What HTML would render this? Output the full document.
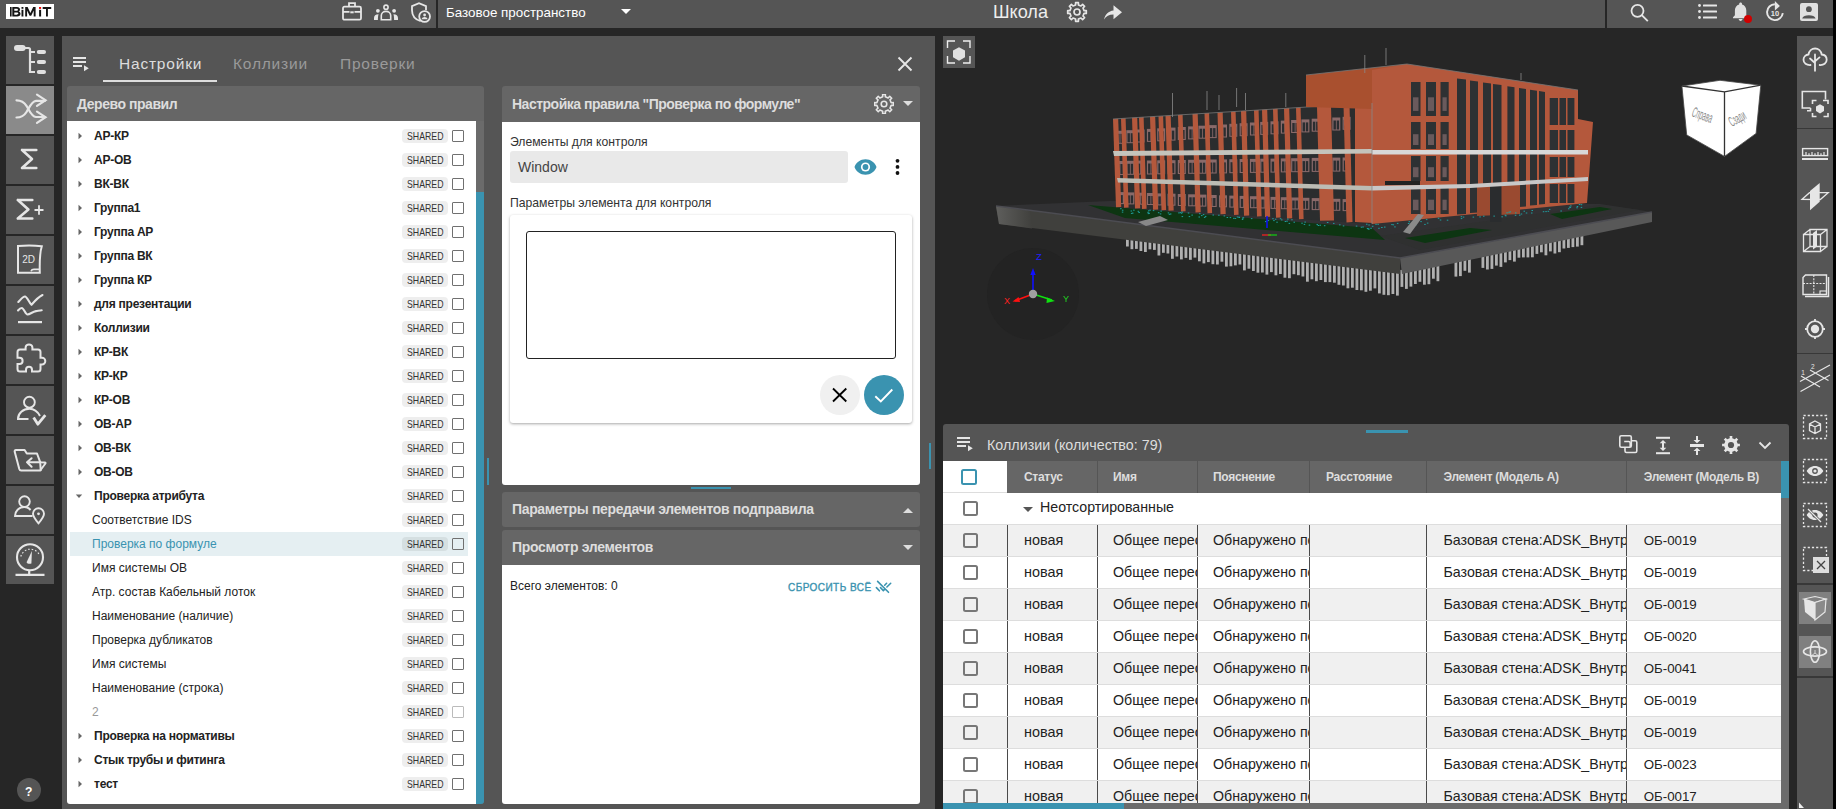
<!DOCTYPE html><html><head><meta charset="utf-8"><style>
html,body{margin:0;padding:0;}
body{width:1836px;height:809px;overflow:hidden;position:relative;background:#262626;font-family:"Liberation Sans",sans-serif;}
div,svg{box-sizing:border-box;}
</style></head><body>
<div style="position:absolute;left:0px;top:0px;width:1833px;height:28px;background:#555555;"></div>
<div style="position:absolute;left:6px;top:4px;width:48px;height:15px;background:#fff;"></div>
<svg style="position:absolute;left:6px;top:4px;" width="48" height="15" viewBox="0 0 48 15"><g fill="#151515">
<rect x="4" y="3" width="1.6" height="9.5"/>
<path d="M6.3 3h4.6c2 0 3.1 1 3.1 2.4c0 1-0.6 1.7-1.4 2c1.2 0.3 1.9 1.2 1.9 2.3c0 1.7-1.3 2.8-3.4 2.8H6.3z M8.3 4.7v2.1h2.3c0.9 0 1.3-0.4 1.3-1.05s-0.4-1.05-1.3-1.05z M8.3 8.4v2.4h2.5c1 0 1.5-0.45 1.5-1.2s-0.5-1.2-1.5-1.2z"/>
<rect x="15.5" y="3" width="1.9" height="1.8"/><rect x="15.5" y="5.8" width="1.9" height="6.7"/>
<path d="M19.2 12.5V3h2.4l2.8 6l2.8-6h2.4v9.5h-1.9V6.5l-2.5 5.3h-1.6l-2.5-5.3v6z"/>
<rect x="33.1" y="5.8" width="2" height="6.7"/>
<path d="M36.7 3h8.5v1.9h-3.3v7.6h-1.9V4.9h-3.3z"/>
</g><rect x="33" y="3" width="2.1" height="1.9" fill="#e00"/></svg>
<svg style="position:absolute;left:340px;top:0px;" width="24" height="24" viewBox="0 0 24 24"><g fill="none" stroke="#e6e6e6" stroke-width="1.8"><rect x="3" y="6.7" width="18" height="13" rx="1.5"/><path d="M9 6.7V3.2h6v3.5"/><path d="M3 11.8h6.5M14.5 11.8H21"/><rect x="10.3" y="11.3" width="3.4" height="2" fill="#e6e6e6" stroke="none"/></g></svg>
<svg style="position:absolute;left:372px;top:0px;" width="28" height="24" viewBox="0 0 28 24"><g fill="#e6e6e6"><circle cx="14" cy="7.2" r="2.1" fill="none" stroke="#e6e6e6" stroke-width="1.6"/><path d="M9.3 19.8V15.6c0-2.5 2.1-4.2 4.7-4.2s4.7 1.7 4.7 4.2V19.8Z" fill="none" stroke="#e6e6e6" stroke-width="1.6"/><circle cx="5.9" cy="10.8" r="1.9"/><circle cx="22.1" cy="10.8" r="1.9"/><path d="M2 20v-2c0-2.2 1.5-3.5 4.6-3.7c-0.5 1.3-0.7 3.3-0.7 5.7z"/><path d="M26 20v-2c0-2.2-1.5-3.5-4.6-3.7c0.5 1.3 0.7 3.3 0.7 5.7z"/></g></svg>
<svg style="position:absolute;left:409px;top:0px;" width="26" height="26" viewBox="0 0 26 26"><g fill="none" stroke="#e6e6e6" stroke-width="1.8"><path d="M11.7 21.2C6.5 19.6 3 15.5 3 10.2V6.2L10 3.2l7 3v4"/><circle cx="15.6" cy="16.5" r="5.4"/></g><circle cx="15.6" cy="15" r="1.4" fill="#e6e6e6"/><path d="M12.6 19.2c0.4-1.4 1.6-2.2 3-2.2s2.6 0.8 3 2.2z" fill="#e6e6e6"/></svg>
<div style="position:absolute;left:436px;top:0px;width:2px;height:28px;background:#262626;"></div>
<div style="position:absolute;left:446px;top:6.45px;font-size:13.4px;line-height:13.4px;height:17.4px;color:#ffffff;font-weight:400;white-space:nowrap;">Базовое пространство</div>
<svg style="position:absolute;left:620px;top:8px;" width="12" height="7" viewBox="0 0 12 7"><path d="M1 1h10l-5 5z" fill="#fff"/></svg>
<div style="position:absolute;left:993px;top:2.67px;font-size:18.1px;line-height:18.1px;height:23.5px;color:#eeeeee;font-weight:400;white-space:nowrap;">Школа</div>
<svg style="position:absolute;left:1066px;top:1px;" width="22" height="22" viewBox="0 0 22 22"><path d="M9.60,3.94 L9.60,3.94 L9.60,1.70 L12.40,1.70 L12.40,3.94 L15.00,5.01 L15.00,5.01 L16.58,3.44 L18.56,5.42 L16.99,7.00 L18.06,9.60 L18.06,9.60 L20.30,9.60 L20.30,12.40 L18.06,12.40 L16.99,15.00 L16.99,15.00 L18.56,16.58 L16.58,18.56 L15.00,16.99 L12.40,18.06 L12.40,18.06 L12.40,20.30 L9.60,20.30 L9.60,18.06 L7.00,16.99 L7.00,16.99 L5.42,18.56 L3.44,16.58 L5.01,15.00 L3.94,12.40 L3.94,12.40 L1.70,12.40 L1.70,9.60 L3.94,9.60 L5.01,7.00 L5.01,7.00 L3.44,5.42 L5.42,3.44 L7.00,5.01Z" fill="none" stroke="#e6e6e6" stroke-width="1.7" stroke-linejoin="round"/><circle cx="11" cy="11" r="3" fill="none" stroke="#e6e6e6" stroke-width="1.7"/></svg>
<svg style="position:absolute;left:1102px;top:2px;" width="22" height="20" viewBox="0 0 22 20"><path d="M11.5 3.2L20 10.2L11.5 17.2V12.6C7 12.6 4.2 14.3 2 17.6C3.2 12.5 6.5 9.2 11.5 8.6Z" fill="#e6e6e6"/></svg>
<div style="position:absolute;left:1605px;top:0px;width:2px;height:28px;background:#262626;"></div>
<svg style="position:absolute;left:1628px;top:2px;" width="22" height="22" viewBox="0 0 22 22"><circle cx="9.5" cy="8.8" r="6" fill="none" stroke="#e6e6e6" stroke-width="1.8"/><path d="M13.8 13.2l6 6" stroke="#e6e6e6" stroke-width="1.9"/></svg>
<svg style="position:absolute;left:1696px;top:2px;" width="22" height="20" viewBox="0 0 22 20"><g fill="#e6e6e6"><circle cx="3.5" cy="3.5" r="1.4"/><circle cx="3.5" cy="9.5" r="1.4"/><circle cx="3.5" cy="15.5" r="1.4"/><rect x="7" y="2.5" width="14" height="2" rx="0.5"/><rect x="7" y="8.5" width="14" height="2" rx="0.5"/><rect x="7" y="14.5" width="14" height="2" rx="0.5"/></g></svg>
<svg style="position:absolute;left:1728px;top:0px;" width="28" height="26" viewBox="0 0 28 26"><g transform="translate(1.2,0.1) scale(0.95)"><path d="M12 22c1.1 0 2-.9 2-2h-4c0 1.1.89 2 2 2zm6-6v-5c0-3.07-1.64-5.64-4.5-6.32V4c0-.83-.67-1.5-1.5-1.5s-1.5.67-1.5 1.5v.68C7.63 5.36 6 7.92 6 11v5l-2 2v1h16v-1l-2-2z" fill="#e0e0e0"/></g><circle cx="20" cy="19" r="4" fill="#d00000"/></svg>
<svg style="position:absolute;left:1764px;top:0px;" width="22" height="24" viewBox="0 0 22 24"><path d="M10.9 4.3A7.9 7.9 0 1 0 18.8 13.2" fill="none" stroke="#e6e6e6" stroke-width="1.9"/><path d="M10.9 1v9.5l5-4.6z" fill="#e6e6e6"/><text x="10.9" y="16.3" font-size="7.5" font-weight="700" text-anchor="middle" fill="#e6e6e6" font-family="Liberation Sans">10</text></svg>
<svg style="position:absolute;left:1799px;top:2px;" width="21" height="21" viewBox="0 0 21 21"><rect x="1" y="1" width="18" height="18" rx="2" fill="#e0e0e0"/><circle cx="9.9" cy="7.2" r="2.9" fill="#555"/><path d="M3.2 16.4c0.6-2 3.3-3.2 6.7-3.2s6.1 1.2 6.7 3.2z" fill="#555"/></svg>
<div style="position:absolute;left:6px;top:36px;width:48px;height:48px;background:#555555;"></div>
<svg style="position:absolute;left:6px;top:36px;" width="48" height="48" viewBox="0 0 48 48"><g fill="#e0e0e0"><rect x="8" y="9" width="11.6" height="6" rx="3"/><rect x="30.8" y="14" width="9.2" height="4" rx="2"/><rect x="30.8" y="24" width="9.2" height="4" rx="2"/><rect x="30.8" y="34" width="9.2" height="4" rx="2"/></g><path d="M19 12h3.5c1 0 1.5 0.5 1.5 1.5V36h5M24 16h5M24 26h5" fill="none" stroke="#e0e0e0" stroke-width="2.2"/></svg>
<div style="position:absolute;left:6px;top:86px;width:48px;height:48px;background:#8a8a8a;"></div>
<svg style="position:absolute;left:6px;top:86px;" width="48" height="48" viewBox="0 0 48 48"><g fill="none" stroke="#e6e6e6" stroke-width="2.2" stroke-linecap="round"><path d="M10.5 14.3c5 0 7.5 1.5 10 5.5s5 10.7 9.5 11.2h9"/><path d="M10.5 31.5c5 0 7.5-1.5 10-5.5s5-10.7 9.5-11.2h9"/><path d="M31 8.6l8.5 5.6l-8.5 5.6M31 25.6l8.5 5.6l-8.5 5.6"/></g></svg>
<div style="position:absolute;left:6px;top:136px;width:48px;height:48px;background:#555555;"></div>
<svg style="position:absolute;left:6px;top:136px;" width="48" height="48" viewBox="0 0 48 48"><path d="M16 14h14.3M16 14l10 9l-10 9M16 32h14.3" fill="none" stroke="#e6e6e6" stroke-width="2.6" stroke-linecap="round" stroke-linejoin="round"/></svg>
<div style="position:absolute;left:6px;top:186px;width:48px;height:48px;background:#555555;"></div>
<svg style="position:absolute;left:6px;top:186px;" width="48" height="48" viewBox="0 0 48 48"><path d="M11.8 14h14.5M11.8 14l10.6 9.5l-10.6 9M11.8 32.5h14.5" fill="none" stroke="#e6e6e6" stroke-width="2.6" stroke-linecap="round" stroke-linejoin="round"/><path d="M28.5 24h9M33 19.2v9.6" stroke="#e6e6e6" stroke-width="1.8"/></svg>
<div style="position:absolute;left:6px;top:236px;width:48px;height:48px;background:#555555;"></div>
<svg style="position:absolute;left:6px;top:236px;" width="48" height="48" viewBox="0 0 48 48"><path d="M12 10c8-0.8 16-0.8 23.8 0.3c-1.5 4.5-2.4 11-2 26.5H12z" fill="none" stroke="#e6e6e6" stroke-width="2"/><path d="M25 35.3c0.5-1.4 1.5-1.9 3-1.9h5" fill="none" stroke="#e6e6e6" stroke-width="1.6"/><text x="22.7" y="27" font-size="10" text-anchor="middle" fill="#e6e6e6" font-family="Liberation Sans">2D</text></svg>
<div style="position:absolute;left:6px;top:286px;width:48px;height:48px;background:#555555;"></div>
<svg style="position:absolute;left:6px;top:286px;" width="48" height="48" viewBox="0 0 48 48"><g fill="none" stroke="#e6e6e6" stroke-width="2.1" stroke-linecap="round" stroke-linejoin="round"><path d="M12.3 16c2.5-2.5 4.5-5.5 6.7-5.5c2 0 4 6 6.5 8.3c3 -3.5 7-8 11-9.8"/><path d="M12 24.5c1.5-1.8 2.8-2.5 3.8-2.5c2 0 3.7 6.5 5.7 6.5c2.5 0 5-2.8 8.5-3.4c2-0.3 4-0.8 5.7-0.9"/></g><rect x="12" y="35" width="24" height="2.2" fill="#e6e6e6"/></svg>
<div style="position:absolute;left:6px;top:336px;width:48px;height:48px;background:#555555;"></div>
<svg style="position:absolute;left:6px;top:336px;" width="48" height="48" viewBox="0 0 48 48"><path d="M14 13.5H19.6V11.6a3.4 3.2 0 0 1 6.8 0V13.5H32a2.5 2.5 0 0 1 2.5 2.5V21.8H36a3.3 3.3 0 0 1 0 6.6H34.5V33a2.5 2.5 0 0 1-2.5 2.5H26V33.8a3 3 0 0 0-6 0V35.5H14a2.5 2.5 0 0 1-2.5-2.5V28H13.5a3.1 3.1 0 0 0 0-6.2H11.5V16a2.5 2.5 0 0 1 2.5-2.5Z" fill="none" stroke="#e6e6e6" stroke-width="2"/></svg>
<div style="position:absolute;left:6px;top:386px;width:48px;height:48px;background:#555555;"></div>
<svg style="position:absolute;left:6px;top:386px;" width="48" height="48" viewBox="0 0 48 48"><circle cx="23.4" cy="16.2" r="5.4" fill="none" stroke="#e6e6e6" stroke-width="1.9"/><path d="M34 30c-2.2-4-6-7.2-10.5-7.2c-6.5 0-11.5 4.5-11.5 10.2h10.5" fill="none" stroke="#e6e6e6" stroke-width="2"/><path d="M27.6 31.6l4.3 6.6l7.4-9" fill="none" stroke="#e6e6e6" stroke-width="2.8" stroke-linejoin="round"/></svg>
<div style="position:absolute;left:6px;top:436px;width:48px;height:48px;background:#555555;"></div>
<svg style="position:absolute;left:6px;top:436px;" width="48" height="48" viewBox="0 0 48 48"><g fill="none" stroke="#e6e6e6" stroke-width="2" stroke-linejoin="round" stroke-linecap="round"><path d="M34.3 26.3L31 17.5H20.8l-2.2-3.5H10c-1.2 0-1.5 0.6-1.3 1.8L13.3 33c0.3 1 0.8 1.5 1.8 1.5H34.2L39.4 27.5c0.4-0.7 0.1-1-0.6-1.1z"/><path d="M34.2 26.3l0.5 8M21 26.2h13.5M25.6 22.2L21 26.2l4.6 4.5"/></g></svg>
<div style="position:absolute;left:6px;top:486px;width:48px;height:48px;background:#555555;"></div>
<svg style="position:absolute;left:6px;top:486px;" width="48" height="48" viewBox="0 0 48 48"><circle cx="18.5" cy="15.6" r="5.3" fill="none" stroke="#e6e6e6" stroke-width="1.9"/><path d="M24.6 24c-1.6-1.8-3.7-3-6.3-3c-5.5 0-9.3 4.3-9.3 9H26.5" fill="none" stroke="#e6e6e6" stroke-width="1.9"/><path d="M32.5 37.3c-3-3.5-5.5-6.5-5.5-9.5a5.5 5.5 0 0 1 11 0c0 3-2.5 6-5.5 9.5z" fill="none" stroke="#e6e6e6" stroke-width="1.9"/><circle cx="32.5" cy="27.8" r="1.4" fill="#e6e6e6"/></svg>
<div style="position:absolute;left:6px;top:536px;width:48px;height:48px;background:#555555;"></div>
<svg style="position:absolute;left:6px;top:536px;" width="48" height="48" viewBox="0 0 48 48"><circle cx="24" cy="21.3" r="13" fill="none" stroke="#e6e6e6" stroke-width="2.1"/><path d="M23.2 34.5v3.6M9.5 38.8h29" stroke="#e6e6e6" stroke-width="2.2"/><path d="M25.9 15L20.6 26.2c0.6 1.5 2.5 1.9 4.8 1.3z" fill="#e6e6e6"/><path d="M14.8 20.5A10 10 0 0 1 33.5 19" fill="none" stroke="#e6e6e6" stroke-width="1.2" stroke-dasharray="1.6 1.9"/></svg>
<div style="position:absolute;left:17px;top:778px;width:24px;height:24px;border-radius:50%;background:#555555;"></div>
<div style="position:absolute;left:25px;top:784.87px;font-size:13.5px;line-height:13.5px;height:17.6px;color:#ffffff;font-weight:700;white-space:nowrap;transform:scaleX(0.9);transform-origin:0 0;">?</div>
<div style="position:absolute;left:62px;top:36px;width:873px;height:773px;background:#555555;"></div>
<div style="position:absolute;left:119px;top:56.48px;font-size:15.5px;line-height:15.5px;height:20.2px;color:#dddddd;font-weight:400;letter-spacing:0.8px;white-space:nowrap;">Настройки</div>
<div style="position:absolute;left:233px;top:56.48px;font-size:15.5px;line-height:15.5px;height:20.2px;color:#9a9a9a;font-weight:400;letter-spacing:0.8px;white-space:nowrap;">Коллизии</div>
<div style="position:absolute;left:340px;top:56.48px;font-size:15.5px;line-height:15.5px;height:20.2px;color:#9a9a9a;font-weight:400;letter-spacing:0.8px;white-space:nowrap;">Проверки</div>
<div style="position:absolute;left:103px;top:80px;width:114px;height:2px;background:#dddddd;"></div>
<svg style="position:absolute;left:72px;top:56px;" width="18" height="16" viewBox="0 0 18 16"><g fill="#e6e6e6"><rect x="1" y="1" width="13" height="2"/><rect x="1" y="5" width="13" height="2"/><rect x="1" y="9" width="9" height="2"/><path d="M12 9.2v6l4.8-3z"/></g></svg>
<svg style="position:absolute;left:896px;top:55px;" width="18" height="18" viewBox="0 0 18 18"><path d="M2.5 2.5l13 13M15.5 2.5l-13 13" stroke="#e6e6e6" stroke-width="1.9"/></svg>
<svg style="position:absolute;left:466px;top:100px;" width="12" height="7" viewBox="0 0 12 7"><path d="M1 1h10l-5 5z" fill="#dddddd"/></svg>
<div style="position:absolute;left:67px;top:86px;width:417px;height:35px;background:#666666;border-radius:3px 3px 0 0;"></div>
<div style="position:absolute;left:77px;top:96.55px;font-size:14px;line-height:14px;height:18.2px;color:#dddddd;font-weight:700;letter-spacing:-0.45px;white-space:nowrap;">Дерево правил</div>
<div style="position:absolute;left:67px;top:121px;width:409px;height:683px;background:#ffffff;border-radius:0 0 0 3px;"></div>
<div style="position:absolute;left:476px;top:121px;width:8px;height:683px;background:#6b6b6b;border-radius:0 0 3px 0;"></div>
<div style="position:absolute;left:476px;top:192px;width:8px;height:612px;background:#3a93b0;border-radius:0 0 3px 0;"></div>
<div style="position:absolute;left:487px;top:458px;width:2px;height:27px;background:#3a93b0;"></div>
<svg style="position:absolute;left:76px;top:131px;" width="8" height="10" viewBox="0 0 8 10"><path d="M2.5 1.8v6.4L6 5z" fill="#666"/></svg>
<div style="position:absolute;left:94px;top:130.04px;font-size:12px;line-height:12px;height:15.6px;color:#222222;font-weight:700;letter-spacing:-0.25px;white-space:nowrap;">АР-КР</div>
<div style="position:absolute;left:402px;top:129px;width:46px;height:14px;background:rgba(0,0,0,0.065);border-radius:4px;"></div>
<div style="position:absolute;left:406.5px;top:131.58px;font-size:10.3px;line-height:10.3px;height:13.4px;color:#333333;font-weight:400;white-space:nowrap;transform:scaleX(0.85);transform-origin:0 0;">SHARED</div>
<div style="position:absolute;left:452px;top:130px;width:12px;height:12px;border:1.5px solid #707070;border-radius:1px;"></div>
<svg style="position:absolute;left:76px;top:155px;" width="8" height="10" viewBox="0 0 8 10"><path d="M2.5 1.8v6.4L6 5z" fill="#666"/></svg>
<div style="position:absolute;left:94px;top:154.04px;font-size:12px;line-height:12px;height:15.6px;color:#222222;font-weight:700;letter-spacing:-0.25px;white-space:nowrap;">АР-ОВ</div>
<div style="position:absolute;left:402px;top:153px;width:46px;height:14px;background:rgba(0,0,0,0.065);border-radius:4px;"></div>
<div style="position:absolute;left:406.5px;top:155.58px;font-size:10.3px;line-height:10.3px;height:13.4px;color:#333333;font-weight:400;white-space:nowrap;transform:scaleX(0.85);transform-origin:0 0;">SHARED</div>
<div style="position:absolute;left:452px;top:154px;width:12px;height:12px;border:1.5px solid #707070;border-radius:1px;"></div>
<svg style="position:absolute;left:76px;top:179px;" width="8" height="10" viewBox="0 0 8 10"><path d="M2.5 1.8v6.4L6 5z" fill="#666"/></svg>
<div style="position:absolute;left:94px;top:178.04px;font-size:12px;line-height:12px;height:15.6px;color:#222222;font-weight:700;letter-spacing:-0.25px;white-space:nowrap;">ВК-ВК</div>
<div style="position:absolute;left:402px;top:177px;width:46px;height:14px;background:rgba(0,0,0,0.065);border-radius:4px;"></div>
<div style="position:absolute;left:406.5px;top:179.58px;font-size:10.3px;line-height:10.3px;height:13.4px;color:#333333;font-weight:400;white-space:nowrap;transform:scaleX(0.85);transform-origin:0 0;">SHARED</div>
<div style="position:absolute;left:452px;top:178px;width:12px;height:12px;border:1.5px solid #707070;border-radius:1px;"></div>
<svg style="position:absolute;left:76px;top:203px;" width="8" height="10" viewBox="0 0 8 10"><path d="M2.5 1.8v6.4L6 5z" fill="#666"/></svg>
<div style="position:absolute;left:94px;top:202.04px;font-size:12px;line-height:12px;height:15.6px;color:#222222;font-weight:700;letter-spacing:-0.25px;white-space:nowrap;">Группа1</div>
<div style="position:absolute;left:402px;top:201px;width:46px;height:14px;background:rgba(0,0,0,0.065);border-radius:4px;"></div>
<div style="position:absolute;left:406.5px;top:203.58px;font-size:10.3px;line-height:10.3px;height:13.4px;color:#333333;font-weight:400;white-space:nowrap;transform:scaleX(0.85);transform-origin:0 0;">SHARED</div>
<div style="position:absolute;left:452px;top:202px;width:12px;height:12px;border:1.5px solid #707070;border-radius:1px;"></div>
<svg style="position:absolute;left:76px;top:227px;" width="8" height="10" viewBox="0 0 8 10"><path d="M2.5 1.8v6.4L6 5z" fill="#666"/></svg>
<div style="position:absolute;left:94px;top:226.04px;font-size:12px;line-height:12px;height:15.6px;color:#222222;font-weight:700;letter-spacing:-0.25px;white-space:nowrap;">Группа АР</div>
<div style="position:absolute;left:402px;top:225px;width:46px;height:14px;background:rgba(0,0,0,0.065);border-radius:4px;"></div>
<div style="position:absolute;left:406.5px;top:227.58px;font-size:10.3px;line-height:10.3px;height:13.4px;color:#333333;font-weight:400;white-space:nowrap;transform:scaleX(0.85);transform-origin:0 0;">SHARED</div>
<div style="position:absolute;left:452px;top:226px;width:12px;height:12px;border:1.5px solid #707070;border-radius:1px;"></div>
<svg style="position:absolute;left:76px;top:251px;" width="8" height="10" viewBox="0 0 8 10"><path d="M2.5 1.8v6.4L6 5z" fill="#666"/></svg>
<div style="position:absolute;left:94px;top:250.04px;font-size:12px;line-height:12px;height:15.6px;color:#222222;font-weight:700;letter-spacing:-0.25px;white-space:nowrap;">Группа ВК</div>
<div style="position:absolute;left:402px;top:249px;width:46px;height:14px;background:rgba(0,0,0,0.065);border-radius:4px;"></div>
<div style="position:absolute;left:406.5px;top:251.58px;font-size:10.3px;line-height:10.3px;height:13.4px;color:#333333;font-weight:400;white-space:nowrap;transform:scaleX(0.85);transform-origin:0 0;">SHARED</div>
<div style="position:absolute;left:452px;top:250px;width:12px;height:12px;border:1.5px solid #707070;border-radius:1px;"></div>
<svg style="position:absolute;left:76px;top:275px;" width="8" height="10" viewBox="0 0 8 10"><path d="M2.5 1.8v6.4L6 5z" fill="#666"/></svg>
<div style="position:absolute;left:94px;top:274.04px;font-size:12px;line-height:12px;height:15.6px;color:#222222;font-weight:700;letter-spacing:-0.25px;white-space:nowrap;">Группа КР</div>
<div style="position:absolute;left:402px;top:273px;width:46px;height:14px;background:rgba(0,0,0,0.065);border-radius:4px;"></div>
<div style="position:absolute;left:406.5px;top:275.58px;font-size:10.3px;line-height:10.3px;height:13.4px;color:#333333;font-weight:400;white-space:nowrap;transform:scaleX(0.85);transform-origin:0 0;">SHARED</div>
<div style="position:absolute;left:452px;top:274px;width:12px;height:12px;border:1.5px solid #707070;border-radius:1px;"></div>
<svg style="position:absolute;left:76px;top:299px;" width="8" height="10" viewBox="0 0 8 10"><path d="M2.5 1.8v6.4L6 5z" fill="#666"/></svg>
<div style="position:absolute;left:94px;top:298.04px;font-size:12px;line-height:12px;height:15.6px;color:#222222;font-weight:700;letter-spacing:-0.25px;white-space:nowrap;">для презентации</div>
<div style="position:absolute;left:402px;top:297px;width:46px;height:14px;background:rgba(0,0,0,0.065);border-radius:4px;"></div>
<div style="position:absolute;left:406.5px;top:299.58px;font-size:10.3px;line-height:10.3px;height:13.4px;color:#333333;font-weight:400;white-space:nowrap;transform:scaleX(0.85);transform-origin:0 0;">SHARED</div>
<div style="position:absolute;left:452px;top:298px;width:12px;height:12px;border:1.5px solid #707070;border-radius:1px;"></div>
<svg style="position:absolute;left:76px;top:323px;" width="8" height="10" viewBox="0 0 8 10"><path d="M2.5 1.8v6.4L6 5z" fill="#666"/></svg>
<div style="position:absolute;left:94px;top:322.04px;font-size:12px;line-height:12px;height:15.6px;color:#222222;font-weight:700;letter-spacing:-0.25px;white-space:nowrap;">Коллизии</div>
<div style="position:absolute;left:402px;top:321px;width:46px;height:14px;background:rgba(0,0,0,0.065);border-radius:4px;"></div>
<div style="position:absolute;left:406.5px;top:323.58px;font-size:10.3px;line-height:10.3px;height:13.4px;color:#333333;font-weight:400;white-space:nowrap;transform:scaleX(0.85);transform-origin:0 0;">SHARED</div>
<div style="position:absolute;left:452px;top:322px;width:12px;height:12px;border:1.5px solid #707070;border-radius:1px;"></div>
<svg style="position:absolute;left:76px;top:347px;" width="8" height="10" viewBox="0 0 8 10"><path d="M2.5 1.8v6.4L6 5z" fill="#666"/></svg>
<div style="position:absolute;left:94px;top:346.04px;font-size:12px;line-height:12px;height:15.6px;color:#222222;font-weight:700;letter-spacing:-0.25px;white-space:nowrap;">КР-ВК</div>
<div style="position:absolute;left:402px;top:345px;width:46px;height:14px;background:rgba(0,0,0,0.065);border-radius:4px;"></div>
<div style="position:absolute;left:406.5px;top:347.58px;font-size:10.3px;line-height:10.3px;height:13.4px;color:#333333;font-weight:400;white-space:nowrap;transform:scaleX(0.85);transform-origin:0 0;">SHARED</div>
<div style="position:absolute;left:452px;top:346px;width:12px;height:12px;border:1.5px solid #707070;border-radius:1px;"></div>
<svg style="position:absolute;left:76px;top:371px;" width="8" height="10" viewBox="0 0 8 10"><path d="M2.5 1.8v6.4L6 5z" fill="#666"/></svg>
<div style="position:absolute;left:94px;top:370.04px;font-size:12px;line-height:12px;height:15.6px;color:#222222;font-weight:700;letter-spacing:-0.25px;white-space:nowrap;">КР-КР</div>
<div style="position:absolute;left:402px;top:369px;width:46px;height:14px;background:rgba(0,0,0,0.065);border-radius:4px;"></div>
<div style="position:absolute;left:406.5px;top:371.58px;font-size:10.3px;line-height:10.3px;height:13.4px;color:#333333;font-weight:400;white-space:nowrap;transform:scaleX(0.85);transform-origin:0 0;">SHARED</div>
<div style="position:absolute;left:452px;top:370px;width:12px;height:12px;border:1.5px solid #707070;border-radius:1px;"></div>
<svg style="position:absolute;left:76px;top:395px;" width="8" height="10" viewBox="0 0 8 10"><path d="M2.5 1.8v6.4L6 5z" fill="#666"/></svg>
<div style="position:absolute;left:94px;top:394.04px;font-size:12px;line-height:12px;height:15.6px;color:#222222;font-weight:700;letter-spacing:-0.25px;white-space:nowrap;">КР-ОВ</div>
<div style="position:absolute;left:402px;top:393px;width:46px;height:14px;background:rgba(0,0,0,0.065);border-radius:4px;"></div>
<div style="position:absolute;left:406.5px;top:395.58px;font-size:10.3px;line-height:10.3px;height:13.4px;color:#333333;font-weight:400;white-space:nowrap;transform:scaleX(0.85);transform-origin:0 0;">SHARED</div>
<div style="position:absolute;left:452px;top:394px;width:12px;height:12px;border:1.5px solid #707070;border-radius:1px;"></div>
<svg style="position:absolute;left:76px;top:419px;" width="8" height="10" viewBox="0 0 8 10"><path d="M2.5 1.8v6.4L6 5z" fill="#666"/></svg>
<div style="position:absolute;left:94px;top:418.04px;font-size:12px;line-height:12px;height:15.6px;color:#222222;font-weight:700;letter-spacing:-0.25px;white-space:nowrap;">ОВ-АР</div>
<div style="position:absolute;left:402px;top:417px;width:46px;height:14px;background:rgba(0,0,0,0.065);border-radius:4px;"></div>
<div style="position:absolute;left:406.5px;top:419.58px;font-size:10.3px;line-height:10.3px;height:13.4px;color:#333333;font-weight:400;white-space:nowrap;transform:scaleX(0.85);transform-origin:0 0;">SHARED</div>
<div style="position:absolute;left:452px;top:418px;width:12px;height:12px;border:1.5px solid #707070;border-radius:1px;"></div>
<svg style="position:absolute;left:76px;top:443px;" width="8" height="10" viewBox="0 0 8 10"><path d="M2.5 1.8v6.4L6 5z" fill="#666"/></svg>
<div style="position:absolute;left:94px;top:442.04px;font-size:12px;line-height:12px;height:15.6px;color:#222222;font-weight:700;letter-spacing:-0.25px;white-space:nowrap;">ОВ-ВК</div>
<div style="position:absolute;left:402px;top:441px;width:46px;height:14px;background:rgba(0,0,0,0.065);border-radius:4px;"></div>
<div style="position:absolute;left:406.5px;top:443.58px;font-size:10.3px;line-height:10.3px;height:13.4px;color:#333333;font-weight:400;white-space:nowrap;transform:scaleX(0.85);transform-origin:0 0;">SHARED</div>
<div style="position:absolute;left:452px;top:442px;width:12px;height:12px;border:1.5px solid #707070;border-radius:1px;"></div>
<svg style="position:absolute;left:76px;top:467px;" width="8" height="10" viewBox="0 0 8 10"><path d="M2.5 1.8v6.4L6 5z" fill="#666"/></svg>
<div style="position:absolute;left:94px;top:466.04px;font-size:12px;line-height:12px;height:15.6px;color:#222222;font-weight:700;letter-spacing:-0.25px;white-space:nowrap;">ОВ-ОВ</div>
<div style="position:absolute;left:402px;top:465px;width:46px;height:14px;background:rgba(0,0,0,0.065);border-radius:4px;"></div>
<div style="position:absolute;left:406.5px;top:467.58px;font-size:10.3px;line-height:10.3px;height:13.4px;color:#333333;font-weight:400;white-space:nowrap;transform:scaleX(0.85);transform-origin:0 0;">SHARED</div>
<div style="position:absolute;left:452px;top:466px;width:12px;height:12px;border:1.5px solid #707070;border-radius:1px;"></div>
<svg style="position:absolute;left:74px;top:492px;" width="10" height="8" viewBox="0 0 10 8"><path d="M1.8 2.5h6.4L5 6z" fill="#666"/></svg>
<div style="position:absolute;left:94px;top:490.04px;font-size:12px;line-height:12px;height:15.6px;color:#222222;font-weight:700;letter-spacing:-0.25px;white-space:nowrap;">Проверка атрибута</div>
<div style="position:absolute;left:402px;top:489px;width:46px;height:14px;background:rgba(0,0,0,0.065);border-radius:4px;"></div>
<div style="position:absolute;left:406.5px;top:491.58px;font-size:10.3px;line-height:10.3px;height:13.4px;color:#333333;font-weight:400;white-space:nowrap;transform:scaleX(0.85);transform-origin:0 0;">SHARED</div>
<div style="position:absolute;left:452px;top:490px;width:12px;height:12px;border:1.5px solid #707070;border-radius:1px;"></div>
<div style="position:absolute;left:92px;top:514.04px;font-size:12px;line-height:12px;height:15.6px;color:#222222;font-weight:400;white-space:nowrap;">Соответствие IDS</div>
<div style="position:absolute;left:402px;top:513px;width:46px;height:14px;background:rgba(0,0,0,0.065);border-radius:4px;"></div>
<div style="position:absolute;left:406.5px;top:515.58px;font-size:10.3px;line-height:10.3px;height:13.4px;color:#333333;font-weight:400;white-space:nowrap;transform:scaleX(0.85);transform-origin:0 0;">SHARED</div>
<div style="position:absolute;left:452px;top:514px;width:12px;height:12px;border:1.5px solid #707070;border-radius:1px;"></div>
<div style="position:absolute;left:70px;top:532px;width:398px;height:24px;background:#e5eff2;"></div>
<div style="position:absolute;left:92px;top:538.04px;font-size:12px;line-height:12px;height:15.6px;color:#3a93b0;font-weight:400;white-space:nowrap;">Проверка по формуле</div>
<div style="position:absolute;left:402px;top:537px;width:46px;height:14px;background:rgba(0,0,0,0.065);border-radius:4px;"></div>
<div style="position:absolute;left:406.5px;top:539.58px;font-size:10.3px;line-height:10.3px;height:13.4px;color:#333333;font-weight:400;white-space:nowrap;transform:scaleX(0.85);transform-origin:0 0;">SHARED</div>
<div style="position:absolute;left:452px;top:538px;width:12px;height:12px;border:1.5px solid #707070;border-radius:1px;"></div>
<div style="position:absolute;left:92px;top:562.04px;font-size:12px;line-height:12px;height:15.6px;color:#222222;font-weight:400;white-space:nowrap;">Имя системы ОВ</div>
<div style="position:absolute;left:402px;top:561px;width:46px;height:14px;background:rgba(0,0,0,0.065);border-radius:4px;"></div>
<div style="position:absolute;left:406.5px;top:563.58px;font-size:10.3px;line-height:10.3px;height:13.4px;color:#333333;font-weight:400;white-space:nowrap;transform:scaleX(0.85);transform-origin:0 0;">SHARED</div>
<div style="position:absolute;left:452px;top:562px;width:12px;height:12px;border:1.5px solid #707070;border-radius:1px;"></div>
<div style="position:absolute;left:92px;top:586.04px;font-size:12px;line-height:12px;height:15.6px;color:#222222;font-weight:400;white-space:nowrap;">Атр. состав Кабельный лоток</div>
<div style="position:absolute;left:402px;top:585px;width:46px;height:14px;background:rgba(0,0,0,0.065);border-radius:4px;"></div>
<div style="position:absolute;left:406.5px;top:587.58px;font-size:10.3px;line-height:10.3px;height:13.4px;color:#333333;font-weight:400;white-space:nowrap;transform:scaleX(0.85);transform-origin:0 0;">SHARED</div>
<div style="position:absolute;left:452px;top:586px;width:12px;height:12px;border:1.5px solid #707070;border-radius:1px;"></div>
<div style="position:absolute;left:92px;top:610.04px;font-size:12px;line-height:12px;height:15.6px;color:#222222;font-weight:400;white-space:nowrap;">Наименование (наличие)</div>
<div style="position:absolute;left:402px;top:609px;width:46px;height:14px;background:rgba(0,0,0,0.065);border-radius:4px;"></div>
<div style="position:absolute;left:406.5px;top:611.58px;font-size:10.3px;line-height:10.3px;height:13.4px;color:#333333;font-weight:400;white-space:nowrap;transform:scaleX(0.85);transform-origin:0 0;">SHARED</div>
<div style="position:absolute;left:452px;top:610px;width:12px;height:12px;border:1.5px solid #707070;border-radius:1px;"></div>
<div style="position:absolute;left:92px;top:634.04px;font-size:12px;line-height:12px;height:15.6px;color:#222222;font-weight:400;white-space:nowrap;">Проверка дубликатов</div>
<div style="position:absolute;left:402px;top:633px;width:46px;height:14px;background:rgba(0,0,0,0.065);border-radius:4px;"></div>
<div style="position:absolute;left:406.5px;top:635.58px;font-size:10.3px;line-height:10.3px;height:13.4px;color:#333333;font-weight:400;white-space:nowrap;transform:scaleX(0.85);transform-origin:0 0;">SHARED</div>
<div style="position:absolute;left:452px;top:634px;width:12px;height:12px;border:1.5px solid #707070;border-radius:1px;"></div>
<div style="position:absolute;left:92px;top:658.04px;font-size:12px;line-height:12px;height:15.6px;color:#222222;font-weight:400;white-space:nowrap;">Имя системы</div>
<div style="position:absolute;left:402px;top:657px;width:46px;height:14px;background:rgba(0,0,0,0.065);border-radius:4px;"></div>
<div style="position:absolute;left:406.5px;top:659.58px;font-size:10.3px;line-height:10.3px;height:13.4px;color:#333333;font-weight:400;white-space:nowrap;transform:scaleX(0.85);transform-origin:0 0;">SHARED</div>
<div style="position:absolute;left:452px;top:658px;width:12px;height:12px;border:1.5px solid #707070;border-radius:1px;"></div>
<div style="position:absolute;left:92px;top:682.04px;font-size:12px;line-height:12px;height:15.6px;color:#222222;font-weight:400;white-space:nowrap;">Наименование (строка)</div>
<div style="position:absolute;left:402px;top:681px;width:46px;height:14px;background:rgba(0,0,0,0.065);border-radius:4px;"></div>
<div style="position:absolute;left:406.5px;top:683.58px;font-size:10.3px;line-height:10.3px;height:13.4px;color:#333333;font-weight:400;white-space:nowrap;transform:scaleX(0.85);transform-origin:0 0;">SHARED</div>
<div style="position:absolute;left:452px;top:682px;width:12px;height:12px;border:1.5px solid #707070;border-radius:1px;"></div>
<div style="position:absolute;left:92px;top:706.04px;font-size:12px;line-height:12px;height:15.6px;color:#999999;font-weight:400;white-space:nowrap;">2</div>
<div style="position:absolute;left:402px;top:705px;width:46px;height:14px;background:rgba(0,0,0,0.065);border-radius:4px;"></div>
<div style="position:absolute;left:406.5px;top:707.58px;font-size:10.3px;line-height:10.3px;height:13.4px;color:#333333;font-weight:400;white-space:nowrap;transform:scaleX(0.85);transform-origin:0 0;">SHARED</div>
<div style="position:absolute;left:452px;top:706px;width:12px;height:12px;border:1.5px solid #bbbbbb;border-radius:1px;"></div>
<svg style="position:absolute;left:76px;top:731px;" width="8" height="10" viewBox="0 0 8 10"><path d="M2.5 1.8v6.4L6 5z" fill="#666"/></svg>
<div style="position:absolute;left:94px;top:730.04px;font-size:12px;line-height:12px;height:15.6px;color:#222222;font-weight:700;letter-spacing:-0.25px;white-space:nowrap;">Проверка на нормативы</div>
<div style="position:absolute;left:402px;top:729px;width:46px;height:14px;background:rgba(0,0,0,0.065);border-radius:4px;"></div>
<div style="position:absolute;left:406.5px;top:731.58px;font-size:10.3px;line-height:10.3px;height:13.4px;color:#333333;font-weight:400;white-space:nowrap;transform:scaleX(0.85);transform-origin:0 0;">SHARED</div>
<div style="position:absolute;left:452px;top:730px;width:12px;height:12px;border:1.5px solid #707070;border-radius:1px;"></div>
<svg style="position:absolute;left:76px;top:755px;" width="8" height="10" viewBox="0 0 8 10"><path d="M2.5 1.8v6.4L6 5z" fill="#666"/></svg>
<div style="position:absolute;left:94px;top:754.04px;font-size:12px;line-height:12px;height:15.6px;color:#222222;font-weight:700;letter-spacing:-0.25px;white-space:nowrap;">Стык трубы и фитинга</div>
<div style="position:absolute;left:402px;top:753px;width:46px;height:14px;background:rgba(0,0,0,0.065);border-radius:4px;"></div>
<div style="position:absolute;left:406.5px;top:755.58px;font-size:10.3px;line-height:10.3px;height:13.4px;color:#333333;font-weight:400;white-space:nowrap;transform:scaleX(0.85);transform-origin:0 0;">SHARED</div>
<div style="position:absolute;left:452px;top:754px;width:12px;height:12px;border:1.5px solid #707070;border-radius:1px;"></div>
<svg style="position:absolute;left:76px;top:779px;" width="8" height="10" viewBox="0 0 8 10"><path d="M2.5 1.8v6.4L6 5z" fill="#666"/></svg>
<div style="position:absolute;left:94px;top:778.04px;font-size:12px;line-height:12px;height:15.6px;color:#222222;font-weight:700;letter-spacing:-0.25px;white-space:nowrap;">тест</div>
<div style="position:absolute;left:402px;top:777px;width:46px;height:14px;background:rgba(0,0,0,0.065);border-radius:4px;"></div>
<div style="position:absolute;left:406.5px;top:779.58px;font-size:10.3px;line-height:10.3px;height:13.4px;color:#333333;font-weight:400;white-space:nowrap;transform:scaleX(0.85);transform-origin:0 0;">SHARED</div>
<div style="position:absolute;left:452px;top:778px;width:12px;height:12px;border:1.5px solid #707070;border-radius:1px;"></div>
<div style="position:absolute;left:502px;top:86px;width:418px;height:36px;background:#666666;border-radius:3px 3px 0 0;"></div>
<div style="position:absolute;left:512px;top:96.75px;font-size:14px;line-height:14px;height:18.2px;color:#dddddd;font-weight:700;letter-spacing:-0.5px;white-space:nowrap;">Настройка правила &quot;Проверка по формуле&quot;</div>
<div style="position:absolute;left:502px;top:122px;width:418px;height:363px;background:#ffffff;border-radius:0 0 3px 3px;"></div>
<svg style="position:absolute;left:874px;top:94px;" width="20" height="20" viewBox="0 0 20 20"><path d="M8.69,2.82 L8.69,2.82 L8.62,0.50 L11.38,0.50 L11.31,2.82 L14.15,3.99 L14.15,3.99 L15.74,2.30 L17.70,4.26 L16.01,5.85 L17.18,8.69 L17.18,8.69 L19.50,8.62 L19.50,11.38 L17.18,11.31 L16.01,14.15 L16.01,14.15 L17.70,15.74 L15.74,17.70 L14.15,16.01 L11.31,17.18 L11.31,17.18 L11.38,19.50 L8.62,19.50 L8.69,17.18 L5.85,16.01 L5.85,16.01 L4.26,17.70 L2.30,15.74 L3.99,14.15 L2.82,11.31 L2.82,11.31 L0.50,11.38 L0.50,8.62 L2.82,8.69 L3.99,5.85 L3.99,5.85 L2.30,4.26 L4.26,2.30 L5.85,3.99Z" fill="none" stroke="#e6e6e6" stroke-width="1.6" stroke-linejoin="round"/><circle cx="10" cy="10" r="2.8" fill="none" stroke="#e6e6e6" stroke-width="1.6"/></svg>
<svg style="position:absolute;left:902px;top:100px;" width="12" height="7" viewBox="0 0 12 7"><path d="M1 1h10l-5 5z" fill="#dddddd"/></svg>
<svg style="position:absolute;left:853px;top:157px;" width="24" height="20" viewBox="0 0 24 20"><path d="M12.5 2.3C7.3 2.3 3.2 5.4 1.5 10c1.7 4.6 5.8 7.7 11 7.7s9.3-3.1 11-7.7c-1.7-4.6-5.8-7.7-11-7.7z" fill="#3a93b0"/><circle cx="12.5" cy="10" r="4.6" fill="#fff"/><circle cx="12.5" cy="10" r="2.9" fill="#3a93b0"/></svg>
<svg style="position:absolute;left:893px;top:157px;" width="9" height="20" viewBox="0 0 9 20"><circle cx="4.5" cy="3.8" r="1.9" fill="#111"/><circle cx="4.5" cy="9.9" r="1.9" fill="#111"/><circle cx="4.5" cy="16" r="1.9" fill="#111"/></svg>
<div style="position:absolute;left:510px;top:136.47px;font-size:12.2px;line-height:12.2px;height:15.9px;color:#333333;font-weight:400;white-space:nowrap;">Элементы для контроля</div>
<div style="position:absolute;left:510px;top:151px;width:338px;height:32px;background:#e9e9e9;border-radius:3px;"></div>
<div style="position:absolute;left:518px;top:160.15px;font-size:14px;line-height:14px;height:18.2px;color:#444444;font-weight:400;white-space:nowrap;">Window</div>
<div style="position:absolute;left:510px;top:196.67px;font-size:12.2px;line-height:12.2px;height:15.9px;color:#333333;font-weight:400;white-space:nowrap;">Параметры элемента для контроля</div>
<div style="position:absolute;left:510px;top:215px;width:402px;height:208px;background:#ffffff;border-radius:3px;box-shadow:0 1px 3px rgba(0,0,0,0.35);"></div>
<div style="position:absolute;left:526px;top:231px;width:370px;height:128px;background:#ffffff;border:1px solid #222;border-radius:3px;"></div>
<div style="position:absolute;left:820px;top:375px;width:40px;height:40px;border-radius:50%;background:#f0f0f0;"></div>
<div style="position:absolute;left:864px;top:375px;width:40px;height:40px;border-radius:50%;background:#3a93b0;"></div>
<svg style="position:absolute;left:830px;top:385px;" width="20" height="20" viewBox="0 0 20 20"><path d="M3 3.5l13.3 13M16.3 3.5L3 16.5" stroke="#000" stroke-width="1.8"/></svg>
<svg style="position:absolute;left:874px;top:385px;" width="20" height="20" viewBox="0 0 20 20"><path d="M1.3 11.3l5.5 5.2L18.3 4.5" fill="none" stroke="#fff" stroke-width="1.9"/></svg>
<div style="position:absolute;left:691px;top:487px;width:40px;height:2px;background:#3a93b0;"></div>
<div style="position:absolute;left:929px;top:443px;width:2px;height:26px;background:#3a93b0;"></div>
<div style="position:absolute;left:502px;top:492px;width:418px;height:35px;background:#666666;border-radius:3px;"></div>
<div style="position:absolute;left:512px;top:502.45px;font-size:14px;line-height:14px;height:18.2px;color:#dddddd;font-weight:700;letter-spacing:-0.35px;white-space:nowrap;">Параметры передачи элементов подправила</div>
<svg style="position:absolute;left:902px;top:507px;" width="12" height="7" viewBox="0 0 12 7"><path d="M1 6h10l-5-5z" fill="#dddddd"/></svg>
<div style="position:absolute;left:502px;top:530px;width:418px;height:35px;background:#666666;border-radius:3px 3px 0 0;"></div>
<div style="position:absolute;left:512px;top:540.15px;font-size:14px;line-height:14px;height:18.2px;color:#dddddd;font-weight:700;letter-spacing:-0.3px;white-space:nowrap;">Просмотр элементов</div>
<svg style="position:absolute;left:902px;top:544px;" width="12" height="7" viewBox="0 0 12 7"><path d="M1 1h10l-5 5z" fill="#dddddd"/></svg>
<div style="position:absolute;left:502px;top:565px;width:418px;height:239px;background:#ffffff;border-radius:0 0 3px 3px;"></div>
<div style="position:absolute;left:510px;top:580.14px;font-size:12px;line-height:12px;height:15.6px;color:#222222;font-weight:400;white-space:nowrap;">Всего элементов: 0</div>
<div style="position:absolute;left:788px;top:582.83px;font-size:10px;line-height:10px;height:13.0px;color:#3a93b0;font-weight:400;letter-spacing:0.45px;white-space:nowrap;-webkit-text-stroke:0.35px #3a93b0;">СБРОСИТЬ ВСЁ</div>
<svg style="position:absolute;left:874px;top:579px;" width="20" height="16" viewBox="0 0 20 16"><g stroke="#3a93b0" stroke-width="1.6" stroke-linecap="round" fill="none"><path d="M3.6 2.4L14.5 13.3M2.4 8.6L5.4 11.8M6.5 8.6L9.3 11.6L11 10.2M12.9 8L16.7 4.3M10.7 6.2L12.6 4.3"/></g></svg>
<div style="position:absolute;left:943px;top:36px;width:32px;height:32px;background:#555555;"></div>
<svg style="position:absolute;left:943px;top:36px;" width="32" height="32" viewBox="0 0 32 32"><path d="M4.5 12V5H12M20 5h7v7M27 20v7h-7M12 27H4.5v-7" fill="none" stroke="#eeeeee" stroke-width="1.4"/><path d="M16 11.2l6 3.4v6.6l-6 3.6l-6-3.6v-6.6z" fill="#e0e0e0"/></svg>
<svg style="position:absolute;left:985px;top:246px;" width="96" height="96" viewBox="0 0 96 96"><circle cx="48" cy="48" r="46" fill="#232323"/>
<path d="M48 48V25" stroke="#1010ff" stroke-width="1.6"/><path d="M45.3 29l2.7-7l2.7 7z" fill="#1010ff"/>
<path d="M48 48l-18 6.8" stroke="#ff1010" stroke-width="1.6"/><path d="M33.5 51l-6 4.6l7.6 0.4z" fill="#ff1010"/>
<path d="M48 48l19 6" stroke="#10e010" stroke-width="1.6"/><path d="M62 51.5l8 3.5l-8.5 2z" fill="#10e010"/>
<circle cx="48" cy="48" r="4.2" fill="#a0a0a0"/>
<text x="51" y="13.5" font-size="9.5" fill="#2020ff" font-family="Liberation Sans">Z</text>
<text x="19" y="58" font-size="9" fill="#ff2020" font-family="Liberation Sans">X</text>
<text x="78" y="56" font-size="9" fill="#20d020" font-family="Liberation Sans">Y</text></svg>
<svg style="position:absolute;left:1676px;top:76px;" width="90" height="86" viewBox="0 0 90 86"><path d="M5.9 10L44 4.3L84.8 9.2L80.1 57.4L48.5 80.4L10.7 58.9z" fill="#ffffff"/>
<path d="M5.9 10L48.5 15.9L84.8 9.2M48.5 15.9V80.4" fill="none" stroke="#333" stroke-width="1.3"/>
<path d="M5.9 10L44 4.3L84.8 9.2L80.1 57.4L48.5 80.4L10.7 58.9z" fill="none" stroke="#444" stroke-width="0.8"/>
<text transform="translate(15,40) rotate(20) scale(0.55,1.3)" font-size="11" fill="#8a8a8a" font-family="Liberation Sans">Справа</text>
<text transform="translate(56,51) rotate(-30) scale(0.55,1.3)" font-size="11" fill="#8a8a8a" font-family="Liberation Sans">Сзади</text></svg>
<svg style="position:absolute;left:0px;top:0px;pointer-events:none;" width="1836" height="809" viewBox="0 0 1836 809"><rect x="1126.0" y="237.1" width="2.8" height="9.4" fill="#b0b0b0"/><rect x="1130.5" y="237.7" width="2.8" height="11.5" fill="#b0b0b0"/><rect x="1135.0" y="238.2" width="2.8" height="10.7" fill="#b0b0b0"/><rect x="1139.5" y="238.7" width="2.8" height="12.3" fill="#b0b0b0"/><rect x="1144.0" y="239.3" width="2.8" height="12.7" fill="#b0b0b0"/><rect x="1148.5" y="239.8" width="2.8" height="9.5" fill="#b0b0b0"/><rect x="1153.0" y="240.4" width="2.8" height="9.5" fill="#b0b0b0"/><rect x="1157.5" y="240.9" width="2.8" height="14.6" fill="#b0b0b0"/><rect x="1162.0" y="241.4" width="2.8" height="11.4" fill="#b0b0b0"/><rect x="1166.5" y="242.0" width="2.8" height="11.5" fill="#b0b0b0"/><rect x="1171.0" y="242.5" width="2.8" height="16.3" fill="#b0b0b0"/><rect x="1175.5" y="243.1" width="2.8" height="13.4" fill="#b0b0b0"/><rect x="1180.0" y="243.6" width="2.8" height="15.8" fill="#b0b0b0"/><rect x="1184.5" y="244.1" width="2.8" height="13.8" fill="#b0b0b0"/><rect x="1189.0" y="244.7" width="2.8" height="15.1" fill="#b0b0b0"/><rect x="1193.5" y="245.2" width="2.8" height="12.4" fill="#b0b0b0"/><rect x="1198.0" y="245.8" width="2.8" height="15.5" fill="#b0b0b0"/><rect x="1202.5" y="246.3" width="2.8" height="17.1" fill="#b0b0b0"/><rect x="1207.0" y="246.8" width="2.8" height="15.3" fill="#b0b0b0"/><rect x="1211.5" y="247.4" width="2.8" height="16.8" fill="#b0b0b0"/><rect x="1216.0" y="247.9" width="2.8" height="16.6" fill="#b0b0b0"/><rect x="1220.5" y="248.5" width="2.8" height="13.2" fill="#b0b0b0"/><rect x="1225.0" y="249.0" width="2.8" height="17.6" fill="#b0b0b0"/><rect x="1229.5" y="249.5" width="2.8" height="16.8" fill="#b0b0b0"/><rect x="1234.0" y="250.1" width="2.8" height="15.3" fill="#b0b0b0"/><rect x="1238.5" y="250.6" width="2.8" height="13.9" fill="#b0b0b0"/><rect x="1243.0" y="251.2" width="2.8" height="19.2" fill="#b0b0b0"/><rect x="1247.5" y="251.7" width="2.8" height="17.0" fill="#b0b0b0"/><rect x="1252.0" y="252.2" width="2.8" height="18.8" fill="#b0b0b0"/><rect x="1256.5" y="252.8" width="2.8" height="19.9" fill="#b0b0b0"/><rect x="1261.0" y="253.3" width="2.8" height="19.2" fill="#b0b0b0"/><rect x="1265.5" y="253.9" width="2.8" height="20.7" fill="#b0b0b0"/><rect x="1270.0" y="254.4" width="2.8" height="17.7" fill="#b0b0b0"/><rect x="1274.5" y="254.9" width="2.8" height="20.4" fill="#b0b0b0"/><rect x="1279.0" y="255.5" width="2.8" height="18.5" fill="#b0b0b0"/><rect x="1283.5" y="256.0" width="2.8" height="21.7" fill="#b0b0b0"/><rect x="1288.0" y="256.6" width="2.8" height="21.6" fill="#b0b0b0"/><rect x="1292.5" y="257.1" width="2.8" height="17.1" fill="#b0b0b0"/><rect x="1297.0" y="257.6" width="2.8" height="17.6" fill="#b0b0b0"/><rect x="1301.5" y="258.2" width="2.8" height="18.3" fill="#b0b0b0"/><rect x="1306.0" y="258.7" width="2.8" height="23.0" fill="#b0b0b0"/><rect x="1310.5" y="259.3" width="2.8" height="20.0" fill="#b0b0b0"/><rect x="1315.0" y="259.8" width="2.8" height="21.4" fill="#b0b0b0"/><rect x="1319.5" y="260.3" width="2.8" height="19.7" fill="#b0b0b0"/><rect x="1324.0" y="260.9" width="2.8" height="21.2" fill="#b0b0b0"/><rect x="1328.5" y="261.4" width="2.8" height="20.7" fill="#b0b0b0"/><rect x="1333.0" y="262.0" width="2.8" height="20.7" fill="#b0b0b0"/><rect x="1337.5" y="262.5" width="2.8" height="22.3" fill="#b0b0b0"/><rect x="1342.0" y="263.0" width="2.8" height="22.5" fill="#b0b0b0"/><rect x="1346.5" y="263.6" width="2.8" height="24.7" fill="#b0b0b0"/><rect x="1351.0" y="264.1" width="2.8" height="23.6" fill="#b0b0b0"/><rect x="1355.5" y="264.7" width="2.8" height="25.3" fill="#b0b0b0"/><rect x="1360.0" y="265.2" width="2.8" height="25.1" fill="#b0b0b0"/><rect x="1364.5" y="265.7" width="2.8" height="26.1" fill="#b0b0b0"/><rect x="1369.0" y="266.3" width="2.8" height="24.4" fill="#b0b0b0"/><rect x="1373.5" y="266.8" width="2.8" height="21.6" fill="#b0b0b0"/><rect x="1378.0" y="267.4" width="2.8" height="26.0" fill="#b0b0b0"/><rect x="1382.5" y="267.9" width="2.8" height="26.9" fill="#b0b0b0"/><rect x="1387.0" y="268.4" width="2.8" height="26.8" fill="#b0b0b0"/><rect x="1391.5" y="269.0" width="2.8" height="25.0" fill="#b0b0b0"/><rect x="1396.0" y="269.5" width="2.8" height="26.1" fill="#b0b0b0"/><rect x="1400.5" y="269.9" width="2.8" height="17.0" fill="#b0b0b0"/><rect x="1405.0" y="269.0" width="2.8" height="19.9" fill="#b0b0b0"/><rect x="1409.5" y="268.1" width="2.8" height="18.5" fill="#b0b0b0"/><rect x="1414.0" y="267.2" width="2.8" height="16.8" fill="#b0b0b0"/><rect x="1418.5" y="266.3" width="2.8" height="15.5" fill="#b0b0b0"/><rect x="1423.0" y="265.4" width="2.8" height="19.3" fill="#b0b0b0"/><rect x="1427.5" y="264.5" width="2.8" height="19.7" fill="#b0b0b0"/><rect x="1432.0" y="263.7" width="2.8" height="15.0" fill="#b0b0b0"/><rect x="1436.5" y="262.8" width="2.8" height="18.4" fill="#b0b0b0"/><rect x="1454.5" y="259.2" width="2.8" height="17.4" fill="#b0b0b0"/><rect x="1459.0" y="258.3" width="2.8" height="17.8" fill="#b0b0b0"/><rect x="1463.5" y="257.4" width="2.8" height="13.4" fill="#b0b0b0"/><rect x="1468.0" y="256.5" width="2.8" height="16.1" fill="#b0b0b0"/><rect x="1481.5" y="253.8" width="2.8" height="14.1" fill="#b0b0b0"/><rect x="1486.0" y="252.9" width="2.8" height="16.6" fill="#b0b0b0"/><rect x="1490.5" y="252.0" width="2.8" height="16.9" fill="#b0b0b0"/><rect x="1495.0" y="251.2" width="2.8" height="14.4" fill="#b0b0b0"/><rect x="1499.5" y="250.3" width="2.8" height="16.6" fill="#b0b0b0"/><rect x="1504.0" y="249.4" width="2.8" height="13.0" fill="#b0b0b0"/><rect x="1508.5" y="248.5" width="2.8" height="11.6" fill="#b0b0b0"/><rect x="1513.0" y="247.6" width="2.8" height="14.0" fill="#b0b0b0"/><rect x="1517.5" y="246.7" width="2.8" height="11.0" fill="#b0b0b0"/><rect x="1522.0" y="245.8" width="2.8" height="11.6" fill="#b0b0b0"/><rect x="1526.5" y="244.9" width="2.8" height="12.5" fill="#b0b0b0"/><rect x="1531.0" y="244.0" width="2.8" height="13.3" fill="#b0b0b0"/><rect x="1535.5" y="243.1" width="2.8" height="10.8" fill="#b0b0b0"/><rect x="1540.0" y="242.2" width="2.8" height="10.1" fill="#b0b0b0"/><rect x="1544.5" y="241.3" width="2.8" height="14.0" fill="#b0b0b0"/><rect x="1549.0" y="240.4" width="2.8" height="11.0" fill="#b0b0b0"/><rect x="1553.5" y="239.5" width="2.8" height="14.0" fill="#b0b0b0"/><rect x="1558.0" y="238.7" width="2.8" height="13.5" fill="#b0b0b0"/><rect x="1562.5" y="237.8" width="2.8" height="10.7" fill="#b0b0b0"/><rect x="1567.0" y="236.9" width="2.8" height="11.0" fill="#b0b0b0"/><rect x="1571.5" y="236.0" width="2.8" height="11.1" fill="#b0b0b0"/><rect x="1576.0" y="235.1" width="2.8" height="11.5" fill="#b0b0b0"/><rect x="1580.5" y="234.2" width="2.8" height="11.0" fill="#b0b0b0"/><defs><linearGradient id="sg" x1="0" x2="1" y1="0" y2="0"><stop offset="0" stop-color="#5e5e5c"/><stop offset="1" stop-color="#40403d"/></linearGradient></defs><polygon points="996,206 1400,258 1400,274 999,224" fill="#40403d" /><polygon points="996,206 1030,210.4 1032,228.4 999,224" fill="url(#sg)" /><polygon points="1400,258 1652,212 1652,222 1402,274" fill="#585858" /><polygon points="996,206 1110,201 1600,204 1652,212 1400,258" fill="#313133" /><path d="M996 206L1400 258L1652 212" fill="none" stroke="#4c4c52" stroke-width="1.5"/><polygon points="1088,205 1372,228 1385,240 1125,218" fill="#0d3512" /><polygon points="1380,236 1600,205 1640,210 1420,250" fill="#2f3030" /><polygon points="1405,238 1470,228 1492,230 1425,243" fill="#0d3512" /><polygon points="1550,214 1600,207 1612,209 1562,219" fill="#0d3512" /><polygon points="1113,119 1372,103 1372,224 1119,207" fill="#2b2d2e" /><rect x="1116.0" y="130.8" width="8" height="13" fill="#8a6a6a"/><rect x="1117.2" y="133.8" width="2.4" height="9" fill="#2a2d30"/><rect x="1120.4" y="133.8" width="2.4" height="9" fill="#2a2d30"/><rect x="1126.3" y="130.2" width="8" height="13" fill="#8a6a6a"/><rect x="1127.5" y="133.2" width="2.4" height="9" fill="#2a2d30"/><rect x="1130.7" y="133.2" width="2.4" height="9" fill="#2a2d30"/><rect x="1136.6" y="129.5" width="8" height="13" fill="#8a6a6a"/><rect x="1137.8" y="132.5" width="2.4" height="9" fill="#2a2d30"/><rect x="1141.0" y="132.5" width="2.4" height="9" fill="#2a2d30"/><rect x="1146.9" y="128.9" width="8" height="13" fill="#8a6a6a"/><rect x="1148.1" y="131.9" width="2.4" height="9" fill="#2a2d30"/><rect x="1151.3" y="131.9" width="2.4" height="9" fill="#2a2d30"/><rect x="1157.2" y="128.3" width="8" height="13" fill="#8a6a6a"/><rect x="1158.4" y="131.3" width="2.4" height="9" fill="#2a2d30"/><rect x="1161.6" y="131.3" width="2.4" height="9" fill="#2a2d30"/><rect x="1167.5" y="127.6" width="8" height="13" fill="#8a6a6a"/><rect x="1168.7" y="130.6" width="2.4" height="9" fill="#2a2d30"/><rect x="1171.9" y="130.6" width="2.4" height="9" fill="#2a2d30"/><rect x="1177.8" y="127.0" width="8" height="13" fill="#8a6a6a"/><rect x="1179.0" y="130.0" width="2.4" height="9" fill="#2a2d30"/><rect x="1182.2" y="130.0" width="2.4" height="9" fill="#2a2d30"/><rect x="1188.1" y="126.4" width="8" height="13" fill="#8a6a6a"/><rect x="1189.3" y="129.4" width="2.4" height="9" fill="#2a2d30"/><rect x="1192.5" y="129.4" width="2.4" height="9" fill="#2a2d30"/><rect x="1198.4" y="125.7" width="8" height="13" fill="#8a6a6a"/><rect x="1199.6" y="128.7" width="2.4" height="9" fill="#2a2d30"/><rect x="1202.8" y="128.7" width="2.4" height="9" fill="#2a2d30"/><rect x="1208.7" y="125.1" width="8" height="13" fill="#8a6a6a"/><rect x="1209.9" y="128.1" width="2.4" height="9" fill="#2a2d30"/><rect x="1213.1" y="128.1" width="2.4" height="9" fill="#2a2d30"/><rect x="1219.0" y="124.5" width="8" height="13" fill="#8a6a6a"/><rect x="1220.2" y="127.5" width="2.4" height="9" fill="#2a2d30"/><rect x="1223.4" y="127.5" width="2.4" height="9" fill="#2a2d30"/><rect x="1229.3" y="123.8" width="8" height="13" fill="#8a6a6a"/><rect x="1230.5" y="126.8" width="2.4" height="9" fill="#2a2d30"/><rect x="1233.7" y="126.8" width="2.4" height="9" fill="#2a2d30"/><rect x="1239.6" y="123.2" width="8" height="13" fill="#8a6a6a"/><rect x="1240.8" y="126.2" width="2.4" height="9" fill="#2a2d30"/><rect x="1244.0" y="126.2" width="2.4" height="9" fill="#2a2d30"/><rect x="1249.9" y="122.5" width="8" height="13" fill="#8a6a6a"/><rect x="1251.1" y="125.5" width="2.4" height="9" fill="#2a2d30"/><rect x="1254.3" y="125.5" width="2.4" height="9" fill="#2a2d30"/><rect x="1260.2" y="121.9" width="8" height="13" fill="#8a6a6a"/><rect x="1261.4" y="124.9" width="2.4" height="9" fill="#2a2d30"/><rect x="1264.6" y="124.9" width="2.4" height="9" fill="#2a2d30"/><rect x="1270.5" y="121.3" width="8" height="13" fill="#8a6a6a"/><rect x="1271.7" y="124.3" width="2.4" height="9" fill="#2a2d30"/><rect x="1274.9" y="124.3" width="2.4" height="9" fill="#2a2d30"/><rect x="1280.8" y="120.6" width="8" height="13" fill="#8a6a6a"/><rect x="1282.0" y="123.6" width="2.4" height="9" fill="#2a2d30"/><rect x="1285.2" y="123.6" width="2.4" height="9" fill="#2a2d30"/><rect x="1291.1" y="120.0" width="8" height="13" fill="#8a6a6a"/><rect x="1292.3" y="123.0" width="2.4" height="9" fill="#2a2d30"/><rect x="1295.5" y="123.0" width="2.4" height="9" fill="#2a2d30"/><rect x="1301.4" y="119.4" width="8" height="13" fill="#8a6a6a"/><rect x="1302.6" y="122.4" width="2.4" height="9" fill="#2a2d30"/><rect x="1305.8" y="122.4" width="2.4" height="9" fill="#2a2d30"/><rect x="1311.7" y="118.7" width="8" height="13" fill="#8a6a6a"/><rect x="1312.9" y="121.7" width="2.4" height="9" fill="#2a2d30"/><rect x="1316.1" y="121.7" width="2.4" height="9" fill="#2a2d30"/><rect x="1322.0" y="118.1" width="8" height="13" fill="#8a6a6a"/><rect x="1323.2" y="121.1" width="2.4" height="9" fill="#2a2d30"/><rect x="1326.4" y="121.1" width="2.4" height="9" fill="#2a2d30"/><rect x="1332.3" y="117.5" width="8" height="13" fill="#8a6a6a"/><rect x="1333.5" y="120.5" width="2.4" height="9" fill="#2a2d30"/><rect x="1336.7" y="120.5" width="2.4" height="9" fill="#2a2d30"/><rect x="1342.6" y="116.8" width="8" height="13" fill="#8a6a6a"/><rect x="1343.8" y="119.8" width="2.4" height="9" fill="#2a2d30"/><rect x="1347.0" y="119.8" width="2.4" height="9" fill="#2a2d30"/><rect x="1116.0" y="161.0" width="8" height="14" fill="#8a6a6a"/><rect x="1117.2" y="164.0" width="2.4" height="10" fill="#2a2d30"/><rect x="1120.4" y="164.0" width="2.4" height="10" fill="#2a2d30"/><rect x="1126.3" y="160.8" width="8" height="14" fill="#8a6a6a"/><rect x="1127.5" y="163.8" width="2.4" height="10" fill="#2a2d30"/><rect x="1130.7" y="163.8" width="2.4" height="10" fill="#2a2d30"/><rect x="1136.6" y="160.6" width="8" height="14" fill="#8a6a6a"/><rect x="1137.8" y="163.6" width="2.4" height="10" fill="#2a2d30"/><rect x="1141.0" y="163.6" width="2.4" height="10" fill="#2a2d30"/><rect x="1146.9" y="160.5" width="8" height="14" fill="#8a6a6a"/><rect x="1148.1" y="163.5" width="2.4" height="10" fill="#2a2d30"/><rect x="1151.3" y="163.5" width="2.4" height="10" fill="#2a2d30"/><rect x="1157.2" y="160.3" width="8" height="14" fill="#8a6a6a"/><rect x="1158.4" y="163.3" width="2.4" height="10" fill="#2a2d30"/><rect x="1161.6" y="163.3" width="2.4" height="10" fill="#2a2d30"/><rect x="1167.5" y="160.2" width="8" height="14" fill="#8a6a6a"/><rect x="1168.7" y="163.2" width="2.4" height="10" fill="#2a2d30"/><rect x="1171.9" y="163.2" width="2.4" height="10" fill="#2a2d30"/><rect x="1177.8" y="160.0" width="8" height="14" fill="#8a6a6a"/><rect x="1179.0" y="163.0" width="2.4" height="10" fill="#2a2d30"/><rect x="1182.2" y="163.0" width="2.4" height="10" fill="#2a2d30"/><rect x="1188.1" y="159.8" width="8" height="14" fill="#8a6a6a"/><rect x="1189.3" y="162.8" width="2.4" height="10" fill="#2a2d30"/><rect x="1192.5" y="162.8" width="2.4" height="10" fill="#2a2d30"/><rect x="1198.4" y="159.7" width="8" height="14" fill="#8a6a6a"/><rect x="1199.6" y="162.7" width="2.4" height="10" fill="#2a2d30"/><rect x="1202.8" y="162.7" width="2.4" height="10" fill="#2a2d30"/><rect x="1208.7" y="159.5" width="8" height="14" fill="#8a6a6a"/><rect x="1209.9" y="162.5" width="2.4" height="10" fill="#2a2d30"/><rect x="1213.1" y="162.5" width="2.4" height="10" fill="#2a2d30"/><rect x="1219.0" y="159.4" width="8" height="14" fill="#8a6a6a"/><rect x="1220.2" y="162.4" width="2.4" height="10" fill="#2a2d30"/><rect x="1223.4" y="162.4" width="2.4" height="10" fill="#2a2d30"/><rect x="1229.3" y="159.2" width="8" height="14" fill="#8a6a6a"/><rect x="1230.5" y="162.2" width="2.4" height="10" fill="#2a2d30"/><rect x="1233.7" y="162.2" width="2.4" height="10" fill="#2a2d30"/><rect x="1239.6" y="159.0" width="8" height="14" fill="#8a6a6a"/><rect x="1240.8" y="162.0" width="2.4" height="10" fill="#2a2d30"/><rect x="1244.0" y="162.0" width="2.4" height="10" fill="#2a2d30"/><rect x="1249.9" y="158.9" width="8" height="14" fill="#8a6a6a"/><rect x="1251.1" y="161.9" width="2.4" height="10" fill="#2a2d30"/><rect x="1254.3" y="161.9" width="2.4" height="10" fill="#2a2d30"/><rect x="1260.2" y="158.7" width="8" height="14" fill="#8a6a6a"/><rect x="1261.4" y="161.7" width="2.4" height="10" fill="#2a2d30"/><rect x="1264.6" y="161.7" width="2.4" height="10" fill="#2a2d30"/><rect x="1270.5" y="158.6" width="8" height="14" fill="#8a6a6a"/><rect x="1271.7" y="161.6" width="2.4" height="10" fill="#2a2d30"/><rect x="1274.9" y="161.6" width="2.4" height="10" fill="#2a2d30"/><rect x="1280.8" y="158.4" width="8" height="14" fill="#8a6a6a"/><rect x="1282.0" y="161.4" width="2.4" height="10" fill="#2a2d30"/><rect x="1285.2" y="161.4" width="2.4" height="10" fill="#2a2d30"/><rect x="1291.1" y="158.2" width="8" height="14" fill="#8a6a6a"/><rect x="1292.3" y="161.2" width="2.4" height="10" fill="#2a2d30"/><rect x="1295.5" y="161.2" width="2.4" height="10" fill="#2a2d30"/><rect x="1301.4" y="158.1" width="8" height="14" fill="#8a6a6a"/><rect x="1302.6" y="161.1" width="2.4" height="10" fill="#2a2d30"/><rect x="1305.8" y="161.1" width="2.4" height="10" fill="#2a2d30"/><rect x="1311.7" y="157.9" width="8" height="14" fill="#8a6a6a"/><rect x="1312.9" y="160.9" width="2.4" height="10" fill="#2a2d30"/><rect x="1316.1" y="160.9" width="2.4" height="10" fill="#2a2d30"/><rect x="1322.0" y="157.8" width="8" height="14" fill="#8a6a6a"/><rect x="1323.2" y="160.8" width="2.4" height="10" fill="#2a2d30"/><rect x="1326.4" y="160.8" width="2.4" height="10" fill="#2a2d30"/><rect x="1332.3" y="157.6" width="8" height="14" fill="#8a6a6a"/><rect x="1333.5" y="160.6" width="2.4" height="10" fill="#2a2d30"/><rect x="1336.7" y="160.6" width="2.4" height="10" fill="#2a2d30"/><rect x="1342.6" y="157.5" width="8" height="14" fill="#8a6a6a"/><rect x="1343.8" y="160.5" width="2.4" height="10" fill="#2a2d30"/><rect x="1347.0" y="160.5" width="2.4" height="10" fill="#2a2d30"/><rect x="1116.0" y="192.1" width="8" height="12" fill="#8a6a6a"/><rect x="1117.2" y="195.1" width="2.4" height="8" fill="#2a2d30"/><rect x="1120.4" y="195.1" width="2.4" height="8" fill="#2a2d30"/><rect x="1126.3" y="192.4" width="8" height="12" fill="#8a6a6a"/><rect x="1127.5" y="195.4" width="2.4" height="8" fill="#2a2d30"/><rect x="1130.7" y="195.4" width="2.4" height="8" fill="#2a2d30"/><rect x="1136.6" y="192.7" width="8" height="12" fill="#8a6a6a"/><rect x="1137.8" y="195.7" width="2.4" height="8" fill="#2a2d30"/><rect x="1141.0" y="195.7" width="2.4" height="8" fill="#2a2d30"/><rect x="1146.9" y="193.0" width="8" height="12" fill="#8a6a6a"/><rect x="1148.1" y="196.0" width="2.4" height="8" fill="#2a2d30"/><rect x="1151.3" y="196.0" width="2.4" height="8" fill="#2a2d30"/><rect x="1157.2" y="193.4" width="8" height="12" fill="#8a6a6a"/><rect x="1158.4" y="196.4" width="2.4" height="8" fill="#2a2d30"/><rect x="1161.6" y="196.4" width="2.4" height="8" fill="#2a2d30"/><rect x="1167.5" y="193.7" width="8" height="12" fill="#8a6a6a"/><rect x="1168.7" y="196.7" width="2.4" height="8" fill="#2a2d30"/><rect x="1171.9" y="196.7" width="2.4" height="8" fill="#2a2d30"/><rect x="1177.8" y="194.0" width="8" height="12" fill="#8a6a6a"/><rect x="1179.0" y="197.0" width="2.4" height="8" fill="#2a2d30"/><rect x="1182.2" y="197.0" width="2.4" height="8" fill="#2a2d30"/><rect x="1188.1" y="194.3" width="8" height="12" fill="#8a6a6a"/><rect x="1189.3" y="197.3" width="2.4" height="8" fill="#2a2d30"/><rect x="1192.5" y="197.3" width="2.4" height="8" fill="#2a2d30"/><rect x="1198.4" y="194.6" width="8" height="12" fill="#8a6a6a"/><rect x="1199.6" y="197.6" width="2.4" height="8" fill="#2a2d30"/><rect x="1202.8" y="197.6" width="2.4" height="8" fill="#2a2d30"/><rect x="1208.7" y="195.0" width="8" height="12" fill="#8a6a6a"/><rect x="1209.9" y="198.0" width="2.4" height="8" fill="#2a2d30"/><rect x="1213.1" y="198.0" width="2.4" height="8" fill="#2a2d30"/><rect x="1219.0" y="195.3" width="8" height="12" fill="#8a6a6a"/><rect x="1220.2" y="198.3" width="2.4" height="8" fill="#2a2d30"/><rect x="1223.4" y="198.3" width="2.4" height="8" fill="#2a2d30"/><rect x="1229.3" y="195.6" width="8" height="12" fill="#8a6a6a"/><rect x="1230.5" y="198.6" width="2.4" height="8" fill="#2a2d30"/><rect x="1233.7" y="198.6" width="2.4" height="8" fill="#2a2d30"/><rect x="1239.6" y="195.9" width="8" height="12" fill="#8a6a6a"/><rect x="1240.8" y="198.9" width="2.4" height="8" fill="#2a2d30"/><rect x="1244.0" y="198.9" width="2.4" height="8" fill="#2a2d30"/><rect x="1249.9" y="196.2" width="8" height="12" fill="#8a6a6a"/><rect x="1251.1" y="199.2" width="2.4" height="8" fill="#2a2d30"/><rect x="1254.3" y="199.2" width="2.4" height="8" fill="#2a2d30"/><rect x="1260.2" y="196.5" width="8" height="12" fill="#8a6a6a"/><rect x="1261.4" y="199.5" width="2.4" height="8" fill="#2a2d30"/><rect x="1264.6" y="199.5" width="2.4" height="8" fill="#2a2d30"/><rect x="1270.5" y="196.9" width="8" height="12" fill="#8a6a6a"/><rect x="1271.7" y="199.9" width="2.4" height="8" fill="#2a2d30"/><rect x="1274.9" y="199.9" width="2.4" height="8" fill="#2a2d30"/><rect x="1280.8" y="197.2" width="8" height="12" fill="#8a6a6a"/><rect x="1282.0" y="200.2" width="2.4" height="8" fill="#2a2d30"/><rect x="1285.2" y="200.2" width="2.4" height="8" fill="#2a2d30"/><rect x="1291.1" y="197.5" width="8" height="12" fill="#8a6a6a"/><rect x="1292.3" y="200.5" width="2.4" height="8" fill="#2a2d30"/><rect x="1295.5" y="200.5" width="2.4" height="8" fill="#2a2d30"/><rect x="1301.4" y="197.8" width="8" height="12" fill="#8a6a6a"/><rect x="1302.6" y="200.8" width="2.4" height="8" fill="#2a2d30"/><rect x="1305.8" y="200.8" width="2.4" height="8" fill="#2a2d30"/><rect x="1311.7" y="198.1" width="8" height="12" fill="#8a6a6a"/><rect x="1312.9" y="201.1" width="2.4" height="8" fill="#2a2d30"/><rect x="1316.1" y="201.1" width="2.4" height="8" fill="#2a2d30"/><rect x="1322.0" y="198.5" width="8" height="12" fill="#8a6a6a"/><rect x="1323.2" y="201.5" width="2.4" height="8" fill="#2a2d30"/><rect x="1326.4" y="201.5" width="2.4" height="8" fill="#2a2d30"/><rect x="1332.3" y="198.8" width="8" height="12" fill="#8a6a6a"/><rect x="1333.5" y="201.8" width="2.4" height="8" fill="#2a2d30"/><rect x="1336.7" y="201.8" width="2.4" height="8" fill="#2a2d30"/><rect x="1342.6" y="199.1" width="8" height="12" fill="#8a6a6a"/><rect x="1343.8" y="202.1" width="2.4" height="8" fill="#2a2d30"/><rect x="1347.0" y="202.1" width="2.4" height="8" fill="#2a2d30"/><path d="M1113.0,119.0 L1118.2,118.7 L1121.2,207.0 L1116.0,207.3z" fill="#b4583c"/><path d="M1121.0,118.5 L1125.6,118.2 L1128.6,207.5 L1124.0,207.8z" fill="#b4583c"/><path d="M1132.0,117.8 L1137.2,117.5 L1140.2,208.2 L1135.0,208.5z" fill="#b4583c"/><path d="M1139.0,117.4 L1143.6,117.1 L1146.6,208.7 L1142.0,209.0z" fill="#b4583c"/><path d="M1150.0,116.7 L1155.2,116.4 L1158.2,209.4 L1153.0,209.7z" fill="#b4583c"/><path d="M1158.5,116.2 L1163.1,115.9 L1166.1,210.0 L1161.5,210.3z" fill="#b4583c"/><path d="M1165.5,115.8 L1170.7,115.5 L1173.7,210.4 L1168.5,210.7z" fill="#b4583c"/><path d="M1178.0,115.0 L1182.6,114.7 L1185.6,211.3 L1181.0,211.6z" fill="#b4583c"/><path d="M1192.5,114.1 L1197.7,113.8 L1200.7,212.2 L1195.5,212.5z" fill="#b4583c"/><path d="M1204.5,113.3 L1209.1,113.0 L1212.1,213.0 L1207.5,213.3z" fill="#b4583c"/><path d="M1217.5,112.5 L1222.7,112.2 L1225.7,213.9 L1220.5,214.2z" fill="#b4583c"/><path d="M1231.0,111.7 L1235.6,111.4 L1238.6,214.7 L1234.0,215.0z" fill="#b4583c"/><path d="M1241.0,111.1 L1246.2,110.8 L1249.2,215.4 L1244.0,215.7z" fill="#b4583c"/><path d="M1254.0,110.3 L1258.6,110.0 L1261.6,216.3 L1257.0,216.6z" fill="#b4583c"/><path d="M1262.0,109.8 L1267.2,109.5 L1270.2,216.8 L1265.0,217.1z" fill="#b4583c"/><path d="M1273.0,109.1 L1277.6,108.8 L1280.6,217.5 L1276.0,217.8z" fill="#b4583c"/><path d="M1284.0,108.4 L1289.2,108.1 L1292.2,218.2 L1287.0,218.5z" fill="#b4583c"/><path d="M1296.0,107.7 L1300.6,107.4 L1303.6,219.0 L1299.0,219.3z" fill="#b4583c"/><path d="M1317.0,106.4 L1331.0,106.1 L1334.0,220.4 L1320.0,220.7z" fill="#b4583c"/><path d="M1343.5,104.8 L1349.5,104.5 L1352.5,222.1 L1346.5,222.4z" fill="#b4583c"/><polygon points="1355,104 1373,103 1373,223 1355,222" fill="#b4583c" /><polygon points="1113,151 1372,149 1372,153.5 1114,156" fill="#c4c4bc" /><polygon points="1117,178 1372,186 1372,190.5 1118,182.5" fill="#bcbcb4" /><path d="M1113 119L1372 103" stroke="#777" stroke-width="0.8"/><polygon points="1306,75 1407,64 1407,110 1306,107" fill="#a9502f" /><polygon points="1372,70 1407,64 1578,90 1578,119 1593,122 1587,203 1372,224" fill="#b4583c" /><path d="M1457,78.6 L1466,79.6 L1466,214.0 L1457,214.5z" fill="#2e3133"/><path d="M1470,80.6 L1478,81.6 L1478,212.4 L1470,212.9z" fill="#2e3133"/><path d="M1483,82.6 L1491,83.6 L1491,210.8 L1483,211.3z" fill="#2e3133"/><path d="M1493,84.1 L1501.5,85.1 L1501.5,209.6 L1493,210.1z" fill="#2e3133"/><path d="M1507.4,86.3 L1514.5,87.3 L1514.5,207.8 L1507.4,208.3z" fill="#2e3133"/><path d="M1519,88.0 L1526,89.0 L1526,206.4 L1519,206.9z" fill="#2e3133"/><path d="M1530,89.7 L1537,90.7 L1537,205.1 L1530,205.6z" fill="#2e3133"/><path d="M1539,91.1 L1545,92.1 L1545,204.0 L1539,204.5z" fill="#2e3133"/><rect x="1411" y="82" width="9.5" height="34" fill="#2e3133"/><rect x="1413" y="97.3" width="5.5" height="13.6" fill="#6a5a5c"/><rect x="1411" y="122" width="9.5" height="27" fill="#2e3133"/><rect x="1413" y="134.2" width="5.5" height="10.8" fill="#6a5a5c"/><rect x="1411" y="156" width="9.5" height="25" fill="#2e3133"/><rect x="1413" y="167.2" width="5.5" height="10.0" fill="#6a5a5c"/><rect x="1411" y="188" width="9.5" height="26" fill="#2e3133"/><rect x="1413" y="199.7" width="5.5" height="10.4" fill="#6a5a5c"/><rect x="1426" y="82" width="10" height="34" fill="#2e3133"/><rect x="1428" y="97.3" width="6" height="13.6" fill="#6a5a5c"/><rect x="1426" y="122" width="10" height="27" fill="#2e3133"/><rect x="1428" y="134.2" width="6" height="10.8" fill="#6a5a5c"/><rect x="1426" y="156" width="10" height="25" fill="#2e3133"/><rect x="1428" y="167.2" width="6" height="10.0" fill="#6a5a5c"/><rect x="1426" y="188" width="10" height="26" fill="#2e3133"/><rect x="1428" y="199.7" width="6" height="10.4" fill="#6a5a5c"/><rect x="1440.5" y="82" width="8.200000000000045" height="34" fill="#2e3133"/><rect x="1442.5" y="97.3" width="4.2000000000000455" height="13.6" fill="#6a5a5c"/><rect x="1440.5" y="122" width="8.200000000000045" height="27" fill="#2e3133"/><rect x="1442.5" y="134.2" width="4.2000000000000455" height="10.8" fill="#6a5a5c"/><rect x="1440.5" y="156" width="8.200000000000045" height="25" fill="#2e3133"/><rect x="1442.5" y="167.2" width="4.2000000000000455" height="10.0" fill="#6a5a5c"/><rect x="1440.5" y="188" width="8.200000000000045" height="26" fill="#2e3133"/><rect x="1442.5" y="199.7" width="4.2000000000000455" height="10.4" fill="#6a5a5c"/><rect x="1549.7" y="98" width="8.299999999999955" height="27" fill="#2e3133"/><rect x="1549.7" y="130" width="8.299999999999955" height="21" fill="#2e3133"/><rect x="1549.7" y="157" width="8.299999999999955" height="20" fill="#2e3133"/><rect x="1549.7" y="184" width="8.299999999999955" height="19" fill="#2e3133"/><rect x="1559.5" y="98" width="6.5" height="27" fill="#2e3133"/><rect x="1559.5" y="130" width="6.5" height="21" fill="#2e3133"/><rect x="1559.5" y="157" width="6.5" height="20" fill="#2e3133"/><rect x="1559.5" y="184" width="6.5" height="19" fill="#2e3133"/><rect x="1567.5" y="98" width="6.900000000000091" height="27" fill="#2e3133"/><rect x="1567.5" y="130" width="6.900000000000091" height="21" fill="#2e3133"/><rect x="1567.5" y="157" width="6.900000000000091" height="20" fill="#2e3133"/><rect x="1567.5" y="184" width="6.900000000000091" height="19" fill="#2e3133"/><polygon points="1477,184 1520,182 1520,214 1477,216" fill="#9a4a30" /><polygon points="1490,184 1501.5,184 1501.5,222 1490,222" fill="#2a2c2e" /><polygon points="1372,150 1588,150 1588,154.5 1372,154.5" fill="#d8d8d8" /><polygon points="1372,186 1470,184 1588,177 1588,181 1470,188 1372,190.5" fill="#c8c8c8" /><polygon points="1385,181 1420,181 1420,185 1385,185" fill="#222" /><path d="M1372 103V224" stroke="#888" stroke-width="0.8"/><path d="M1306 75L1407 64L1578 90" stroke="#777" stroke-width="0.8" fill="none"/><path d="M1172.5 93V117" stroke="#8a8a8a" stroke-width="0.8"/><path d="M1207 91V110" stroke="#8a8a8a" stroke-width="0.8"/><path d="M1219 95V110" stroke="#8a8a8a" stroke-width="0.8"/><path d="M1236.6 88V107" stroke="#8a8a8a" stroke-width="0.8"/><path d="M1245.5 93V110" stroke="#8a8a8a" stroke-width="0.8"/><path d="M1285.8 93V107" stroke="#8a8a8a" stroke-width="0.8"/><path d="M1364.8 55V73" stroke="#8a8a8a" stroke-width="0.8"/><path d="M1386 48V65" stroke="#8a8a8a" stroke-width="0.8"/><path d="M1521 73V80" stroke="#8a8a8a" stroke-width="0.8"/><rect x="1272.2" y="218.2" width="1.5" height="1" fill="#1fa0a0"/><rect x="1425.9" y="219.1" width="1.5" height="1" fill="#1fa0a0"/><rect x="1371.9" y="225.8" width="1.5" height="1" fill="#1fa0a0"/><rect x="1147.3" y="211.8" width="1.5" height="1" fill="#1fa0a0"/><rect x="1137.6" y="210.8" width="1.5" height="1" fill="#1fa0a0"/><rect x="1152.8" y="210.1" width="1.5" height="1" fill="#1fa0a0"/><rect x="1319.5" y="224.7" width="1.5" height="1" fill="#1fa0a0"/><rect x="1178.2" y="212.4" width="1.5" height="1" fill="#1fa0a0"/><rect x="1414.9" y="224.5" width="1.5" height="1" fill="#1fa0a0"/><rect x="1391.2" y="224.1" width="1.5" height="1" fill="#1fa0a0"/><rect x="1578.8" y="204.0" width="1.5" height="1" fill="#1fa0a0"/><rect x="1523.5" y="210.7" width="1.5" height="1" fill="#1fa0a0"/><rect x="1187.8" y="212.5" width="1.5" height="1" fill="#1fa0a0"/><rect x="1265.0" y="221.1" width="1.5" height="1" fill="#1fa0a0"/><rect x="1204.9" y="215.9" width="1.5" height="1" fill="#1fa0a0"/><rect x="1420.3" y="221.1" width="1.5" height="1" fill="#1fa0a0"/><rect x="1377.4" y="223.8" width="1.5" height="1" fill="#1fa0a0"/><rect x="1148.0" y="210.3" width="1.5" height="1" fill="#1fa0a0"/><rect x="1439.8" y="219.5" width="1.5" height="1" fill="#1fa0a0"/><rect x="1267.6" y="220.1" width="1.5" height="1" fill="#1fa0a0"/><rect x="1333.0" y="222.9" width="1.5" height="1" fill="#1fa0a0"/><rect x="1493.4" y="215.6" width="1.5" height="1" fill="#1fa0a0"/><rect x="1234.7" y="217.9" width="1.5" height="1" fill="#1fa0a0"/><rect x="1366.8" y="228.0" width="1.5" height="1" fill="#1fa0a0"/><rect x="1462.8" y="216.6" width="1.5" height="1" fill="#1fa0a0"/><rect x="1580.7" y="204.2" width="1.5" height="1" fill="#1fa0a0"/><rect x="1316.5" y="224.1" width="1.5" height="1" fill="#1fa0a0"/><rect x="1191.4" y="214.6" width="1.5" height="1" fill="#1fa0a0"/><rect x="1138.4" y="212.0" width="1.5" height="1" fill="#1fa0a0"/><rect x="1479.3" y="216.4" width="1.5" height="1" fill="#1fa0a0"/><rect x="1531.5" y="210.0" width="1.5" height="1" fill="#1fa0a0"/><rect x="1446.8" y="219.7" width="1.5" height="1" fill="#1fa0a0"/><rect x="1392.6" y="224.3" width="1.5" height="1" fill="#1fa0a0"/><rect x="1514.8" y="214.8" width="1.5" height="1" fill="#1fa0a0"/><rect x="1342.8" y="225.4" width="1.5" height="1" fill="#1fa0a0"/><rect x="1148.5" y="212.8" width="1.5" height="1" fill="#1fa0a0"/><rect x="1424.2" y="223.9" width="1.5" height="1" fill="#1fa0a0"/><rect x="1506.3" y="212.3" width="1.5" height="1" fill="#1fa0a0"/><rect x="1301.3" y="222.7" width="1.5" height="1" fill="#1fa0a0"/><rect x="1130.6" y="210.5" width="1.5" height="1" fill="#1fa0a0"/><rect x="1199.0" y="213.2" width="1.5" height="1" fill="#1fa0a0"/><rect x="1147.7" y="213.1" width="1.5" height="1" fill="#1fa0a0"/><rect x="1180.8" y="212.7" width="1.5" height="1" fill="#1fa0a0"/><rect x="1303.7" y="223.9" width="1.5" height="1" fill="#1fa0a0"/><rect x="1157.9" y="212.2" width="1.5" height="1" fill="#1fa0a0"/><rect x="1378.2" y="227.8" width="1.5" height="1" fill="#1fa0a0"/><rect x="1505.1" y="215.3" width="1.5" height="1" fill="#1fa0a0"/><rect x="1250.9" y="218.1" width="1.5" height="1" fill="#1fa0a0"/><rect x="1288.6" y="222.9" width="1.5" height="1" fill="#1fa0a0"/><rect x="1570.1" y="205.4" width="1.5" height="1" fill="#1fa0a0"/><rect x="1202.8" y="214.1" width="1.5" height="1" fill="#1fa0a0"/><rect x="1229.7" y="217.1" width="1.5" height="1" fill="#1fa0a0"/><rect x="1396.9" y="222.9" width="1.5" height="1" fill="#1fa0a0"/><rect x="1121.9" y="209.7" width="1.5" height="1" fill="#1fa0a0"/><rect x="1293.5" y="221.7" width="1.5" height="1" fill="#1fa0a0"/><rect x="1568.0" y="208.3" width="1.5" height="1" fill="#1fa0a0"/><rect x="1362.3" y="226.5" width="1.5" height="1" fill="#1fa0a0"/><rect x="1437.8" y="217.8" width="1.5" height="1" fill="#1fa0a0"/><rect x="1542.8" y="211.2" width="1.5" height="1" fill="#1fa0a0"/><rect x="1531.0" y="212.5" width="1.5" height="1" fill="#1fa0a0"/><rect x="1304.4" y="221.6" width="1.5" height="1" fill="#1fa0a0"/><rect x="1168.7" y="213.8" width="1.5" height="1" fill="#1fa0a0"/><rect x="1149.3" y="209.7" width="1.5" height="1" fill="#1fa0a0"/><rect x="1218.1" y="214.7" width="1.5" height="1" fill="#1fa0a0"/><rect x="1279.8" y="218.2" width="1.5" height="1" fill="#1fa0a0"/><rect x="1120.1" y="208.2" width="1.5" height="1" fill="#1fa0a0"/><rect x="1167.7" y="212.4" width="1.5" height="1" fill="#1fa0a0"/><rect x="1132.0" y="212.6" width="1.5" height="1" fill="#1fa0a0"/><rect x="1408.6" y="221.2" width="1.5" height="1" fill="#1fa0a0"/><rect x="1238.6" y="217.0" width="1.5" height="1" fill="#1fa0a0"/><rect x="1291.2" y="219.3" width="1.5" height="1" fill="#1fa0a0"/><rect x="1519.0" y="214.6" width="1.5" height="1" fill="#1fa0a0"/><rect x="1339.0" y="224.3" width="1.5" height="1" fill="#1fa0a0"/><rect x="1160.4" y="210.6" width="1.5" height="1" fill="#1fa0a0"/><rect x="1281.0" y="219.4" width="1.5" height="1" fill="#1fa0a0"/><rect x="1509.6" y="211.4" width="1.5" height="1" fill="#1fa0a0"/><rect x="1130.9" y="212.9" width="1.5" height="1" fill="#1fa0a0"/><rect x="1368.3" y="224.5" width="1.5" height="1" fill="#1fa0a0"/><rect x="1375.3" y="223.8" width="1.5" height="1" fill="#1fa0a0"/><rect x="1368.2" y="228.6" width="1.5" height="1" fill="#1fa0a0"/><rect x="1525.8" y="212.5" width="1.5" height="1" fill="#1fa0a0"/><rect x="1242.7" y="217.3" width="1.5" height="1" fill="#1fa0a0"/><rect x="1198.5" y="216.5" width="1.5" height="1" fill="#1fa0a0"/><rect x="1370.3" y="227.8" width="1.5" height="1" fill="#1fa0a0"/><rect x="1274.9" y="218.7" width="1.5" height="1" fill="#1fa0a0"/><rect x="1501.4" y="216.3" width="1.5" height="1" fill="#1fa0a0"/><rect x="1520.7" y="213.5" width="1.5" height="1" fill="#1fa0a0"/><rect x="1504.6" y="214.7" width="1.5" height="1" fill="#1fa0a0"/><rect x="1226.6" y="217.0" width="1.5" height="1" fill="#1fa0a0"/><rect x="1287.1" y="218.6" width="1.5" height="1" fill="#1fa0a0"/><rect x="1133.1" y="209.7" width="1.5" height="1" fill="#1fa0a0"/><rect x="1241.8" y="218.9" width="1.5" height="1" fill="#1fa0a0"/><rect x="1569.6" y="206.9" width="1.5" height="1" fill="#1fa0a0"/><rect x="1560.4" y="210.5" width="1.5" height="1" fill="#1fa0a0"/><rect x="1568.9" y="206.6" width="1.5" height="1" fill="#1fa0a0"/><rect x="1223.6" y="215.4" width="1.5" height="1" fill="#1fa0a0"/><rect x="1212.5" y="214.5" width="1.5" height="1" fill="#1fa0a0"/><rect x="1413.3" y="224.5" width="1.5" height="1" fill="#1fa0a0"/><rect x="1515.0" y="212.4" width="1.5" height="1" fill="#1fa0a0"/><rect x="1426.9" y="222.6" width="1.5" height="1" fill="#1fa0a0"/><rect x="1159.8" y="213.4" width="1.5" height="1" fill="#1fa0a0"/><rect x="1547.6" y="210.8" width="1.5" height="1" fill="#1fa0a0"/><rect x="1472.6" y="216.6" width="1.5" height="1" fill="#1fa0a0"/><rect x="1203.9" y="216.9" width="1.5" height="1" fill="#1fa0a0"/><rect x="1276.3" y="221.7" width="1.5" height="1" fill="#1fa0a0"/><rect x="1576.7" y="206.0" width="1.5" height="1" fill="#1fa0a0"/><rect x="1308.7" y="224.6" width="1.5" height="1" fill="#1fa0a0"/><rect x="1460.7" y="216.2" width="1.5" height="1" fill="#1fa0a0"/><rect x="1179.7" y="212.1" width="1.5" height="1" fill="#1fa0a0"/><rect x="1545.3" y="211.1" width="1.5" height="1" fill="#1fa0a0"/><rect x="1188.7" y="216.1" width="1.5" height="1" fill="#1fa0a0"/><rect x="1580.7" y="206.9" width="1.5" height="1" fill="#1fa0a0"/><rect x="1284.7" y="221.0" width="1.5" height="1" fill="#1fa0a0"/><rect x="1181.6" y="211.6" width="1.5" height="1" fill="#1fa0a0"/><rect x="1576.3" y="207.3" width="1.5" height="1" fill="#1fa0a0"/><rect x="1367.5" y="228.4" width="1.5" height="1" fill="#1fa0a0"/><rect x="1323.9" y="225.2" width="1.5" height="1" fill="#1fa0a0"/><rect x="1508.3" y="211.7" width="1.5" height="1" fill="#1fa0a0"/><rect x="1238.4" y="216.7" width="1.5" height="1" fill="#1fa0a0"/><rect x="1233.1" y="217.8" width="1.5" height="1" fill="#1fa0a0"/><rect x="1241.9" y="217.6" width="1.5" height="1" fill="#1fa0a0"/><rect x="1181.6" y="216.1" width="1.5" height="1" fill="#1fa0a0"/><rect x="1286.3" y="220.7" width="1.5" height="1" fill="#1fa0a0"/><rect x="1394.2" y="226.4" width="1.5" height="1" fill="#1fa0a0"/><rect x="1317.7" y="225.0" width="1.5" height="1" fill="#1fa0a0"/><rect x="1355.8" y="225.6" width="1.5" height="1" fill="#1fa0a0"/><rect x="1366.0" y="223.7" width="1.5" height="1" fill="#1fa0a0"/><rect x="1326.9" y="222.0" width="1.5" height="1" fill="#1fa0a0"/><rect x="1121.8" y="211.6" width="1.5" height="1" fill="#1fa0a0"/><rect x="1201.0" y="215.1" width="1.5" height="1" fill="#1fa0a0"/><rect x="1460.8" y="218.1" width="1.5" height="1" fill="#1fa0a0"/><rect x="1273.2" y="220.1" width="1.5" height="1" fill="#1fa0a0"/><rect x="1381.1" y="227.0" width="1.5" height="1" fill="#1fa0a0"/><rect x="1169.9" y="213.5" width="1.5" height="1" fill="#1fa0a0"/><rect x="1236.8" y="216.5" width="1.5" height="1" fill="#1fa0a0"/><rect x="1483.0" y="215.7" width="1.5" height="1" fill="#1fa0a0"/><rect x="1384.0" y="226.6" width="1.5" height="1" fill="#1fa0a0"/><rect x="1548.9" y="208.9" width="1.5" height="1" fill="#1fa0a0"/><rect x="1407.9" y="223.0" width="1.5" height="1" fill="#1fa0a0"/><rect x="1360.7" y="226.7" width="1.5" height="1" fill="#1fa0a0"/><polygon points="1403,232 1418,214 1424,215 1410,234" fill="#8a8a8a" /><polygon points="1138,222 1160,216 1168,220 1146,226" fill="#888" /><path d="M1267 228v-12" stroke="#1010ff" stroke-width="1.5"/><path d="M1262 235h9" stroke="#ff2020" stroke-width="1.2"/><path d="M1268 235h9" stroke="#10d010" stroke-width="1.2"/></svg>
<div style="position:absolute;left:1797px;top:36px;width:36px;height:773px;background:#555555;"></div>
<div style="position:absolute;left:1797px;top:127.5px;width:36px;height:1.5px;background:#383838;"></div>
<div style="position:absolute;left:1797px;top:352.5px;width:36px;height:1.5px;background:#383838;"></div>
<div style="position:absolute;left:1797px;top:583px;width:36px;height:1.5px;background:#383838;"></div>
<div style="position:absolute;left:1797px;top:676px;width:36px;height:1.5px;background:#383838;"></div>
<div style="position:absolute;left:1799px;top:592px;width:32px;height:32px;background:#808080;"></div>
<div style="position:absolute;left:1799px;top:636px;width:32px;height:32px;background:#808080;"></div>
<svg style="position:absolute;left:1797px;top:36px;" width="36" height="92" viewBox="0 0 36 92"><g fill="none" stroke="#e6e6e6" stroke-width="1.8" stroke-linecap="round">
<path d="M13.5 29c-4 0.3-7-1.8-7-5.3c0-3 2.3-5 5-5.2c0.5-3.5 3.3-6 6.6-6s6 2.5 6.6 6c2.8 0.3 5 2.3 5 5.3c0 3.3-3 5.5-7 5.2"/>
<path d="M18 18.5V34.8M18 27l-5-4.5M18 25.2l4.5-3.8"/></g>
<g fill="none" stroke="#e6e6e6" stroke-width="1.6"><path d="M13.5 72H5.3V55.5H28.5v8"/><path d="M10 74.8h3.5V72"/>
<path d="M15.5 68V64.5h4M26 64.5h5V68M31 77V80.5h-4.5M19.5 80.5H15.5V77"/></g>
<path d="M23 68.2l4 2.3v4.6l-4 2.3l-4-2.3v-4.6z" fill="#e6e6e6"/></svg>
<svg style="position:absolute;left:1797px;top:128px;" width="36" height="92" viewBox="0 0 36 92"><rect x="5.6" y="20.6" width="25" height="7" fill="none" stroke="#e6e6e6" stroke-width="1.4"/>
<path d="M9 27v-3M12 27v-1.8M15 27v-3M18 27v-1.8M21 27v-3M24 27v-1.8M27 27v-3" stroke="#e6e6e6" stroke-width="1.2"/>
<rect x="5" y="30" width="26" height="2" fill="#e6e6e6"/>
<path d="M22.7 55V73.8L13 82.3V63z" fill="#e6e6e6"/>
<path d="M5.1 71.3L12.5 64.7H31.2L23.3 71.5z" fill="none" stroke="#e6e6e6" stroke-width="1.3"/></svg>
<svg style="position:absolute;left:1797px;top:220px;" width="36" height="92" viewBox="0 0 36 92"><g fill="none" stroke="#e6e6e6" stroke-width="1.3"><path d="M6.5 14.5h17v17h-17z M13 9.5h17v17h-17z M6.5 14.5L13 9.5M23.5 14.5L30 9.5M23.5 31.5L30 26.5M6.5 31.5L13 26.5"/></g>
<path d="M16 13l4-3v16.5l-4 3z" fill="#e6e6e6"/>
<path d="M6 57.5l2.5-2.5H29.5V74.5H6z" fill="none" stroke="#e6e6e6" stroke-width="1.4"/>
<path d="M8 76.5H31.5V57" fill="none" stroke="#e6e6e6" stroke-width="1.5"/>
<path d="M6 63.5H29.5M16.8 55V74.5" fill="none" stroke="#e6e6e6" stroke-width="1.1" stroke-dasharray="2 1.3"/>
<rect x="23" y="71" width="6.5" height="3.5" fill="none" stroke="#e6e6e6" stroke-width="1.1"/></svg>
<svg style="position:absolute;left:1797px;top:312px;" width="36" height="92" viewBox="0 0 36 92"><circle cx="18" cy="17" r="7.8" fill="none" stroke="#e6e6e6" stroke-width="1.8"/><circle cx="18" cy="17" r="4.2" fill="#e6e6e6"/>
<path d="M18 7v2.2M18 24.8V27M8 17h2.2M25.8 17H28" stroke="#e6e6e6" stroke-width="1.8"/>
<path d="M3 69.5L33 53M3.5 79.5L33 63M4 64l19 11M13 58l18.5 10.5" stroke="#e6e6e6" stroke-width="1.2"/>
<text x="4.3" y="62.5" font-size="6.5" fill="#e6e6e6" font-family="Liberation Sans">1</text><text x="14" y="57" font-size="6.5" fill="#e6e6e6" font-family="Liberation Sans">2</text></svg>
<svg style="position:absolute;left:1797px;top:404px;" width="36" height="92" viewBox="0 0 36 92"><rect x="6.5" y="11.5" width="23" height="23" fill="none" stroke="#e6e6e6" stroke-width="1.3" stroke-dasharray="2.2 2"/><path d="M18 17l5.5 3v6.5L18 29.5l-5.5-3V20z M12.5 20L18 23l5.5-3M18 23v6.5" fill="none" stroke="#e6e6e6" stroke-width="1.3"/><rect x="6.5" y="55.5" width="23" height="23" fill="none" stroke="#e6e6e6" stroke-width="1.3" stroke-dasharray="2.2 2"/><path d="M18 62c-4 0-7 2.5-8.3 5c1.3 2.5 4.3 5 8.3 5s7-2.5 8.3-5c-1.3-2.5-4.3-5-8.3-5z" fill="#e6e6e6"/><circle cx="18" cy="67" r="2.9" fill="#555"/><circle cx="18" cy="67" r="1.6" fill="#e6e6e6"/></svg>
<svg style="position:absolute;left:1797px;top:496px;" width="36" height="92" viewBox="0 0 36 92"><rect x="6.5" y="7.5" width="23" height="23" fill="none" stroke="#e6e6e6" stroke-width="1.3" stroke-dasharray="2.2 2"/><path d="M18 14c-4 0-7 2.5-8.3 5c1.3 2.5 4.3 5 8.3 5s7-2.5 8.3-5c-1.3-2.5-4.3-5-8.3-5z" fill="#e6e6e6"/><circle cx="18" cy="19" r="2.6" fill="#555"/><path d="M11 13l13 13" stroke="#555" stroke-width="2.6"/><path d="M11 13l13 13" stroke="#e6e6e6" stroke-width="1.2"/><rect x="6.5" y="51.5" width="23" height="23" fill="none" stroke="#e6e6e6" stroke-width="1.3" stroke-dasharray="2.2 2"/><rect x="16" y="61" width="16" height="16" fill="#dddddd"/><path d="M20 65l8 8M28 65l-8 8" stroke="#444" stroke-width="1.3"/></svg>
<svg style="position:absolute;left:1797px;top:588px;" width="36" height="92" viewBox="0 0 36 92"><path d="M7 11l11-2.5L29 11l-11 3.5z" fill="none" stroke="#e6e6e6" stroke-width="1.2"/>
<path d="M7 11l11 3.5V32L8 24z" fill="#e6e6e6"/><path d="M18 14.5L29 11l-1 13-10 8z" fill="#8a8a8a" stroke="#e6e6e6" stroke-width="1.2"/>
<ellipse cx="18" cy="63.5" rx="11.5" ry="4.6" fill="none" stroke="#e6e6e6" stroke-width="1.6"/>
<ellipse cx="18" cy="63.5" rx="4.6" ry="10.8" fill="none" stroke="#e6e6e6" stroke-width="1.6"/>
<path d="M18 62v3M18 65l-3 2.3M18 65l3 2.3" stroke="#e6e6e6" stroke-width="0.8"/></svg>
<svg style="position:absolute;left:1797px;top:801px;" width="12" height="8" viewBox="0 0 12 8"><path d="M2 1.5v5.5h5z" fill="#eee"/></svg>
<div style="position:absolute;left:943px;top:424px;width:846px;height:385px;background:#555555;border-radius:3px 3px 0 0;"></div>
<div style="position:absolute;left:1366px;top:430px;width:42px;height:3px;background:#3a93b0;"></div>
<div style="position:absolute;left:987px;top:438.09px;font-size:14.3px;line-height:14.3px;height:18.6px;color:#dddddd;font-weight:400;white-space:nowrap;">Коллизии (количество: 79)</div>
<svg style="position:absolute;left:956px;top:436px;" width="18" height="16" viewBox="0 0 18 16"><g fill="#e6e6e6"><rect x="1" y="1" width="13" height="2"/><rect x="1" y="5" width="13" height="2"/><rect x="1" y="9" width="9" height="2"/><path d="M12 9.2v6l4.8-3z"/></g></svg>
<svg style="position:absolute;left:1617px;top:433px;" width="22" height="22" viewBox="0 0 22 22"><g fill="none" stroke="#e6e6e6" stroke-width="1.6"><rect x="2.8" y="2.8" width="11.5" height="11.5" rx="1.5"/><path d="M8 14.3V18c0 0.8 0.7 1.5 1.5 1.5h8.8c0.8 0 1.5-0.7 1.5-1.5V9.3c0-0.8-0.7-1.5-1.5-1.5H14.3"/><path d="M7.2 8.5h4.5c0.8 0 1.5 0.7 1.5 1.5v4"/></g></svg>
<svg style="position:absolute;left:1653px;top:434px;" width="20" height="22" viewBox="0 0 20 22"><g fill="#e6e6e6"><rect x="3" y="2.8" width="14" height="2"/><rect x="3" y="18.2" width="14" height="2"/><path d="M10 6l3.3 3.3h-2.3v4.4h2.3L10 17l-3.3-3.3h2.3V9.3H6.7z"/></g></svg>
<svg style="position:absolute;left:1687px;top:434px;" width="20" height="22" viewBox="0 0 20 22"><g fill="#e6e6e6"><rect x="3" y="10" width="14" height="3"/><path d="M9 2h2v4h2.5L10 9.2L6.5 6H9z M9 21h-2v0h0z"/><path d="M9 21v-4H6.5L10 13.8l3.5 3.2H11v4z"/></g></svg>
<svg style="position:absolute;left:1721px;top:435px;" width="20" height="20" viewBox="0 0 20 20"><path d="M8.76,3.52 L8.76,3.52 L8.65,1.10 L11.35,1.10 L11.24,3.52 L13.71,4.54 L13.71,4.54 L15.34,2.75 L17.25,4.66 L15.46,6.29 L16.48,8.76 L16.48,8.76 L18.90,8.65 L18.90,11.35 L16.48,11.24 L15.46,13.71 L15.46,13.71 L17.25,15.34 L15.34,17.25 L13.71,15.46 L11.24,16.48 L11.24,16.48 L11.35,18.90 L8.65,18.90 L8.76,16.48 L6.29,15.46 L6.29,15.46 L4.66,17.25 L2.75,15.34 L4.54,13.71 L3.52,11.24 L3.52,11.24 L1.10,11.35 L1.10,8.65 L3.52,8.76 L4.54,6.29 L4.54,6.29 L2.75,4.66 L4.66,2.75 L6.29,4.54Z" fill="#e6e6e6" fill-rule="evenodd"/><circle cx="10" cy="10" r="3.3" fill="#555555"/><circle cx="10" cy="10" r="6.8" fill="#e6e6e6"/><circle cx="10" cy="10" r="3.1" fill="#555555"/></svg>
<svg style="position:absolute;left:1757px;top:440px;" width="16" height="12" viewBox="0 0 16 12"><path d="M2.5 2.5l5.5 5.5l5.5-5.5" fill="none" stroke="#e6e6e6" stroke-width="1.8"/></svg>
<div style="position:absolute;left:943px;top:461px;width:64px;height:32px;background:#ffffff;"></div>
<div style="position:absolute;left:1007px;top:461px;width:774px;height:32px;background:#666666;"></div>
<div style="position:absolute;left:943px;top:492px;width:64px;height:1px;background:#dddddd;"></div>
<div style="position:absolute;left:961px;top:469px;width:16px;height:16px;border:2px solid #3a93b0;border-radius:2.5px;"></div>
<div style="position:absolute;left:1097px;top:461px;width:1px;height:32px;background:#555555;"></div>
<div style="position:absolute;left:1197px;top:461px;width:1px;height:32px;background:#555555;"></div>
<div style="position:absolute;left:1309px;top:461px;width:1px;height:32px;background:#555555;"></div>
<div style="position:absolute;left:1426px;top:461px;width:1px;height:32px;background:#555555;"></div>
<div style="position:absolute;left:1626px;top:461px;width:1px;height:32px;background:#555555;"></div>
<div style="position:absolute;left:1024px;top:470.84px;font-size:12px;line-height:12px;height:15.6px;color:#dddddd;font-weight:700;letter-spacing:-0.3px;white-space:nowrap;">Статус</div>
<div style="position:absolute;left:1113px;top:470.84px;font-size:12px;line-height:12px;height:15.6px;color:#dddddd;font-weight:700;letter-spacing:-0.3px;white-space:nowrap;">Имя</div>
<div style="position:absolute;left:1213px;top:470.84px;font-size:12px;line-height:12px;height:15.6px;color:#dddddd;font-weight:700;letter-spacing:-0.3px;white-space:nowrap;">Пояснение</div>
<div style="position:absolute;left:1326px;top:470.84px;font-size:12px;line-height:12px;height:15.6px;color:#dddddd;font-weight:700;letter-spacing:-0.3px;white-space:nowrap;">Расстояние</div>
<div style="position:absolute;left:1443.5px;top:470.84px;font-size:12px;line-height:12px;height:15.6px;color:#dddddd;font-weight:700;letter-spacing:-0.3px;white-space:nowrap;">Элемент (Модель А)</div>
<div style="position:absolute;left:1643.7px;top:470.84px;font-size:12px;line-height:12px;height:15.6px;color:#dddddd;font-weight:700;letter-spacing:-0.3px;white-space:nowrap;">Элемент (Модель В)</div>
<div style="position:absolute;left:1781px;top:461px;width:8px;height:348px;background:#6b6b6b;"></div>
<div style="position:absolute;left:1781px;top:461px;width:8px;height:37px;background:#3a93b0;"></div>
<div style="position:absolute;left:943px;top:493px;width:838px;height:31px;background:#ffffff;"></div>
<div style="position:absolute;left:943px;top:492px;width:64px;height:1px;background:#dddddd;"></div>
<div style="position:absolute;left:963px;top:501px;width:15px;height:15px;border:2px solid #777;border-radius:2.5px;"></div>
<svg style="position:absolute;left:1022px;top:506px;" width="12" height="7" viewBox="0 0 12 7"><path d="M1 1h10l-5 5z" fill="#555"/></svg>
<div style="position:absolute;left:1040px;top:500.48px;font-size:14.2px;line-height:14.2px;height:18.5px;color:#222222;font-weight:400;white-space:nowrap;">Неотсортированные</div>
<div style="position:absolute;left:943px;top:524px;width:838px;height:1px;background:#dddddd;"></div>
<div style="position:absolute;left:943px;top:525px;width:838px;height:31px;background:#f0f0f0;"></div>
<div style="position:absolute;left:943px;top:556px;width:838px;height:1px;background:#dddddd;"></div>
<div style="position:absolute;left:1007px;top:525px;width:1.2px;height:31px;background:#4a4a4a;"></div>
<div style="position:absolute;left:1097px;top:525px;width:1.2px;height:31px;background:#4a4a4a;"></div>
<div style="position:absolute;left:1197px;top:525px;width:1.2px;height:31px;background:#4a4a4a;"></div>
<div style="position:absolute;left:1309px;top:525px;width:1.2px;height:31px;background:#4a4a4a;"></div>
<div style="position:absolute;left:1426px;top:525px;width:1.2px;height:31px;background:#4a4a4a;"></div>
<div style="position:absolute;left:1626px;top:525px;width:1.2px;height:31px;background:#4a4a4a;"></div>
<div style="position:absolute;left:963px;top:533px;width:15px;height:15px;border:2px solid #777;border-radius:2.5px;"></div>
<div style="position:absolute;left:1024px;top:532.81px;font-size:14.4px;line-height:14.4px;height:18.7px;color:#222222;font-weight:400;white-space:nowrap;">новая</div>
<div style="position:absolute;left:1113px;top:532.98px;font-size:14.2px;line-height:14.2px;height:18.5px;color:#222222;font-weight:400;white-space:nowrap;width:84px;overflow:hidden;">Общее пересечение</div>
<div style="position:absolute;left:1213px;top:532.98px;font-size:14.2px;line-height:14.2px;height:18.5px;color:#222222;font-weight:400;white-space:nowrap;width:96px;overflow:hidden;">Обнаружено пересечение</div>
<div style="position:absolute;left:1443.5px;top:532.98px;font-size:14.2px;line-height:14.2px;height:18.5px;color:#222222;font-weight:400;white-space:nowrap;width:182.5px;overflow:hidden;">Базовая стена:ADSK_Внутренняя</div>
<div style="position:absolute;left:1643.7px;top:533.74px;font-size:13.3px;line-height:13.3px;height:17.3px;color:#222222;font-weight:400;white-space:nowrap;">ОБ-0019</div>
<div style="position:absolute;left:943px;top:557px;width:838px;height:31px;background:#ffffff;"></div>
<div style="position:absolute;left:943px;top:588px;width:838px;height:1px;background:#dddddd;"></div>
<div style="position:absolute;left:1007px;top:557px;width:1.2px;height:31px;background:#4a4a4a;"></div>
<div style="position:absolute;left:1097px;top:557px;width:1.2px;height:31px;background:#4a4a4a;"></div>
<div style="position:absolute;left:1197px;top:557px;width:1.2px;height:31px;background:#4a4a4a;"></div>
<div style="position:absolute;left:1309px;top:557px;width:1.2px;height:31px;background:#4a4a4a;"></div>
<div style="position:absolute;left:1426px;top:557px;width:1.2px;height:31px;background:#4a4a4a;"></div>
<div style="position:absolute;left:1626px;top:557px;width:1.2px;height:31px;background:#4a4a4a;"></div>
<div style="position:absolute;left:963px;top:565px;width:15px;height:15px;border:2px solid #777;border-radius:2.5px;"></div>
<div style="position:absolute;left:1024px;top:564.81px;font-size:14.4px;line-height:14.4px;height:18.7px;color:#222222;font-weight:400;white-space:nowrap;">новая</div>
<div style="position:absolute;left:1113px;top:564.98px;font-size:14.2px;line-height:14.2px;height:18.5px;color:#222222;font-weight:400;white-space:nowrap;width:84px;overflow:hidden;">Общее пересечение</div>
<div style="position:absolute;left:1213px;top:564.98px;font-size:14.2px;line-height:14.2px;height:18.5px;color:#222222;font-weight:400;white-space:nowrap;width:96px;overflow:hidden;">Обнаружено пересечение</div>
<div style="position:absolute;left:1443.5px;top:564.98px;font-size:14.2px;line-height:14.2px;height:18.5px;color:#222222;font-weight:400;white-space:nowrap;width:182.5px;overflow:hidden;">Базовая стена:ADSK_Внутренняя</div>
<div style="position:absolute;left:1643.7px;top:565.74px;font-size:13.3px;line-height:13.3px;height:17.3px;color:#222222;font-weight:400;white-space:nowrap;">ОБ-0019</div>
<div style="position:absolute;left:943px;top:589px;width:838px;height:31px;background:#f0f0f0;"></div>
<div style="position:absolute;left:943px;top:620px;width:838px;height:1px;background:#dddddd;"></div>
<div style="position:absolute;left:1007px;top:589px;width:1.2px;height:31px;background:#4a4a4a;"></div>
<div style="position:absolute;left:1097px;top:589px;width:1.2px;height:31px;background:#4a4a4a;"></div>
<div style="position:absolute;left:1197px;top:589px;width:1.2px;height:31px;background:#4a4a4a;"></div>
<div style="position:absolute;left:1309px;top:589px;width:1.2px;height:31px;background:#4a4a4a;"></div>
<div style="position:absolute;left:1426px;top:589px;width:1.2px;height:31px;background:#4a4a4a;"></div>
<div style="position:absolute;left:1626px;top:589px;width:1.2px;height:31px;background:#4a4a4a;"></div>
<div style="position:absolute;left:963px;top:597px;width:15px;height:15px;border:2px solid #777;border-radius:2.5px;"></div>
<div style="position:absolute;left:1024px;top:596.81px;font-size:14.4px;line-height:14.4px;height:18.7px;color:#222222;font-weight:400;white-space:nowrap;">новая</div>
<div style="position:absolute;left:1113px;top:596.98px;font-size:14.2px;line-height:14.2px;height:18.5px;color:#222222;font-weight:400;white-space:nowrap;width:84px;overflow:hidden;">Общее пересечение</div>
<div style="position:absolute;left:1213px;top:596.98px;font-size:14.2px;line-height:14.2px;height:18.5px;color:#222222;font-weight:400;white-space:nowrap;width:96px;overflow:hidden;">Обнаружено пересечение</div>
<div style="position:absolute;left:1443.5px;top:596.98px;font-size:14.2px;line-height:14.2px;height:18.5px;color:#222222;font-weight:400;white-space:nowrap;width:182.5px;overflow:hidden;">Базовая стена:ADSK_Внутренняя</div>
<div style="position:absolute;left:1643.7px;top:597.74px;font-size:13.3px;line-height:13.3px;height:17.3px;color:#222222;font-weight:400;white-space:nowrap;">ОБ-0019</div>
<div style="position:absolute;left:943px;top:621px;width:838px;height:31px;background:#ffffff;"></div>
<div style="position:absolute;left:943px;top:652px;width:838px;height:1px;background:#dddddd;"></div>
<div style="position:absolute;left:1007px;top:621px;width:1.2px;height:31px;background:#4a4a4a;"></div>
<div style="position:absolute;left:1097px;top:621px;width:1.2px;height:31px;background:#4a4a4a;"></div>
<div style="position:absolute;left:1197px;top:621px;width:1.2px;height:31px;background:#4a4a4a;"></div>
<div style="position:absolute;left:1309px;top:621px;width:1.2px;height:31px;background:#4a4a4a;"></div>
<div style="position:absolute;left:1426px;top:621px;width:1.2px;height:31px;background:#4a4a4a;"></div>
<div style="position:absolute;left:1626px;top:621px;width:1.2px;height:31px;background:#4a4a4a;"></div>
<div style="position:absolute;left:963px;top:629px;width:15px;height:15px;border:2px solid #777;border-radius:2.5px;"></div>
<div style="position:absolute;left:1024px;top:628.81px;font-size:14.4px;line-height:14.4px;height:18.7px;color:#222222;font-weight:400;white-space:nowrap;">новая</div>
<div style="position:absolute;left:1113px;top:628.98px;font-size:14.2px;line-height:14.2px;height:18.5px;color:#222222;font-weight:400;white-space:nowrap;width:84px;overflow:hidden;">Общее пересечение</div>
<div style="position:absolute;left:1213px;top:628.98px;font-size:14.2px;line-height:14.2px;height:18.5px;color:#222222;font-weight:400;white-space:nowrap;width:96px;overflow:hidden;">Обнаружено пересечение</div>
<div style="position:absolute;left:1443.5px;top:628.98px;font-size:14.2px;line-height:14.2px;height:18.5px;color:#222222;font-weight:400;white-space:nowrap;width:182.5px;overflow:hidden;">Базовая стена:ADSK_Внутренняя</div>
<div style="position:absolute;left:1643.7px;top:629.74px;font-size:13.3px;line-height:13.3px;height:17.3px;color:#222222;font-weight:400;white-space:nowrap;">ОБ-0020</div>
<div style="position:absolute;left:943px;top:653px;width:838px;height:31px;background:#f0f0f0;"></div>
<div style="position:absolute;left:943px;top:684px;width:838px;height:1px;background:#dddddd;"></div>
<div style="position:absolute;left:1007px;top:653px;width:1.2px;height:31px;background:#4a4a4a;"></div>
<div style="position:absolute;left:1097px;top:653px;width:1.2px;height:31px;background:#4a4a4a;"></div>
<div style="position:absolute;left:1197px;top:653px;width:1.2px;height:31px;background:#4a4a4a;"></div>
<div style="position:absolute;left:1309px;top:653px;width:1.2px;height:31px;background:#4a4a4a;"></div>
<div style="position:absolute;left:1426px;top:653px;width:1.2px;height:31px;background:#4a4a4a;"></div>
<div style="position:absolute;left:1626px;top:653px;width:1.2px;height:31px;background:#4a4a4a;"></div>
<div style="position:absolute;left:963px;top:661px;width:15px;height:15px;border:2px solid #777;border-radius:2.5px;"></div>
<div style="position:absolute;left:1024px;top:660.81px;font-size:14.4px;line-height:14.4px;height:18.7px;color:#222222;font-weight:400;white-space:nowrap;">новая</div>
<div style="position:absolute;left:1113px;top:660.98px;font-size:14.2px;line-height:14.2px;height:18.5px;color:#222222;font-weight:400;white-space:nowrap;width:84px;overflow:hidden;">Общее пересечение</div>
<div style="position:absolute;left:1213px;top:660.98px;font-size:14.2px;line-height:14.2px;height:18.5px;color:#222222;font-weight:400;white-space:nowrap;width:96px;overflow:hidden;">Обнаружено пересечение</div>
<div style="position:absolute;left:1443.5px;top:660.98px;font-size:14.2px;line-height:14.2px;height:18.5px;color:#222222;font-weight:400;white-space:nowrap;width:182.5px;overflow:hidden;">Базовая стена:ADSK_Внутренняя</div>
<div style="position:absolute;left:1643.7px;top:661.74px;font-size:13.3px;line-height:13.3px;height:17.3px;color:#222222;font-weight:400;white-space:nowrap;">ОБ-0041</div>
<div style="position:absolute;left:943px;top:685px;width:838px;height:31px;background:#ffffff;"></div>
<div style="position:absolute;left:943px;top:716px;width:838px;height:1px;background:#dddddd;"></div>
<div style="position:absolute;left:1007px;top:685px;width:1.2px;height:31px;background:#4a4a4a;"></div>
<div style="position:absolute;left:1097px;top:685px;width:1.2px;height:31px;background:#4a4a4a;"></div>
<div style="position:absolute;left:1197px;top:685px;width:1.2px;height:31px;background:#4a4a4a;"></div>
<div style="position:absolute;left:1309px;top:685px;width:1.2px;height:31px;background:#4a4a4a;"></div>
<div style="position:absolute;left:1426px;top:685px;width:1.2px;height:31px;background:#4a4a4a;"></div>
<div style="position:absolute;left:1626px;top:685px;width:1.2px;height:31px;background:#4a4a4a;"></div>
<div style="position:absolute;left:963px;top:693px;width:15px;height:15px;border:2px solid #777;border-radius:2.5px;"></div>
<div style="position:absolute;left:1024px;top:692.81px;font-size:14.4px;line-height:14.4px;height:18.7px;color:#222222;font-weight:400;white-space:nowrap;">новая</div>
<div style="position:absolute;left:1113px;top:692.98px;font-size:14.2px;line-height:14.2px;height:18.5px;color:#222222;font-weight:400;white-space:nowrap;width:84px;overflow:hidden;">Общее пересечение</div>
<div style="position:absolute;left:1213px;top:692.98px;font-size:14.2px;line-height:14.2px;height:18.5px;color:#222222;font-weight:400;white-space:nowrap;width:96px;overflow:hidden;">Обнаружено пересечение</div>
<div style="position:absolute;left:1443.5px;top:692.98px;font-size:14.2px;line-height:14.2px;height:18.5px;color:#222222;font-weight:400;white-space:nowrap;width:182.5px;overflow:hidden;">Базовая стена:ADSK_Внутренняя</div>
<div style="position:absolute;left:1643.7px;top:693.74px;font-size:13.3px;line-height:13.3px;height:17.3px;color:#222222;font-weight:400;white-space:nowrap;">ОБ-0019</div>
<div style="position:absolute;left:943px;top:717px;width:838px;height:31px;background:#f0f0f0;"></div>
<div style="position:absolute;left:943px;top:748px;width:838px;height:1px;background:#dddddd;"></div>
<div style="position:absolute;left:1007px;top:717px;width:1.2px;height:31px;background:#4a4a4a;"></div>
<div style="position:absolute;left:1097px;top:717px;width:1.2px;height:31px;background:#4a4a4a;"></div>
<div style="position:absolute;left:1197px;top:717px;width:1.2px;height:31px;background:#4a4a4a;"></div>
<div style="position:absolute;left:1309px;top:717px;width:1.2px;height:31px;background:#4a4a4a;"></div>
<div style="position:absolute;left:1426px;top:717px;width:1.2px;height:31px;background:#4a4a4a;"></div>
<div style="position:absolute;left:1626px;top:717px;width:1.2px;height:31px;background:#4a4a4a;"></div>
<div style="position:absolute;left:963px;top:725px;width:15px;height:15px;border:2px solid #777;border-radius:2.5px;"></div>
<div style="position:absolute;left:1024px;top:724.81px;font-size:14.4px;line-height:14.4px;height:18.7px;color:#222222;font-weight:400;white-space:nowrap;">новая</div>
<div style="position:absolute;left:1113px;top:724.98px;font-size:14.2px;line-height:14.2px;height:18.5px;color:#222222;font-weight:400;white-space:nowrap;width:84px;overflow:hidden;">Общее пересечение</div>
<div style="position:absolute;left:1213px;top:724.98px;font-size:14.2px;line-height:14.2px;height:18.5px;color:#222222;font-weight:400;white-space:nowrap;width:96px;overflow:hidden;">Обнаружено пересечение</div>
<div style="position:absolute;left:1443.5px;top:724.98px;font-size:14.2px;line-height:14.2px;height:18.5px;color:#222222;font-weight:400;white-space:nowrap;width:182.5px;overflow:hidden;">Базовая стена:ADSK_Внутренняя</div>
<div style="position:absolute;left:1643.7px;top:725.74px;font-size:13.3px;line-height:13.3px;height:17.3px;color:#222222;font-weight:400;white-space:nowrap;">ОБ-0019</div>
<div style="position:absolute;left:943px;top:749px;width:838px;height:31px;background:#ffffff;"></div>
<div style="position:absolute;left:943px;top:780px;width:838px;height:1px;background:#dddddd;"></div>
<div style="position:absolute;left:1007px;top:749px;width:1.2px;height:31px;background:#4a4a4a;"></div>
<div style="position:absolute;left:1097px;top:749px;width:1.2px;height:31px;background:#4a4a4a;"></div>
<div style="position:absolute;left:1197px;top:749px;width:1.2px;height:31px;background:#4a4a4a;"></div>
<div style="position:absolute;left:1309px;top:749px;width:1.2px;height:31px;background:#4a4a4a;"></div>
<div style="position:absolute;left:1426px;top:749px;width:1.2px;height:31px;background:#4a4a4a;"></div>
<div style="position:absolute;left:1626px;top:749px;width:1.2px;height:31px;background:#4a4a4a;"></div>
<div style="position:absolute;left:963px;top:757px;width:15px;height:15px;border:2px solid #777;border-radius:2.5px;"></div>
<div style="position:absolute;left:1024px;top:756.81px;font-size:14.4px;line-height:14.4px;height:18.7px;color:#222222;font-weight:400;white-space:nowrap;">новая</div>
<div style="position:absolute;left:1113px;top:756.98px;font-size:14.2px;line-height:14.2px;height:18.5px;color:#222222;font-weight:400;white-space:nowrap;width:84px;overflow:hidden;">Общее пересечение</div>
<div style="position:absolute;left:1213px;top:756.98px;font-size:14.2px;line-height:14.2px;height:18.5px;color:#222222;font-weight:400;white-space:nowrap;width:96px;overflow:hidden;">Обнаружено пересечение</div>
<div style="position:absolute;left:1443.5px;top:756.98px;font-size:14.2px;line-height:14.2px;height:18.5px;color:#222222;font-weight:400;white-space:nowrap;width:182.5px;overflow:hidden;">Базовая стена:ADSK_Внутренняя</div>
<div style="position:absolute;left:1643.7px;top:757.74px;font-size:13.3px;line-height:13.3px;height:17.3px;color:#222222;font-weight:400;white-space:nowrap;">ОБ-0023</div>
<div style="position:absolute;left:943px;top:781px;width:838px;height:31px;background:#f0f0f0;"></div>
<div style="position:absolute;left:943px;top:812px;width:838px;height:1px;background:#dddddd;"></div>
<div style="position:absolute;left:1007px;top:781px;width:1.2px;height:31px;background:#4a4a4a;"></div>
<div style="position:absolute;left:1097px;top:781px;width:1.2px;height:31px;background:#4a4a4a;"></div>
<div style="position:absolute;left:1197px;top:781px;width:1.2px;height:31px;background:#4a4a4a;"></div>
<div style="position:absolute;left:1309px;top:781px;width:1.2px;height:31px;background:#4a4a4a;"></div>
<div style="position:absolute;left:1426px;top:781px;width:1.2px;height:31px;background:#4a4a4a;"></div>
<div style="position:absolute;left:1626px;top:781px;width:1.2px;height:31px;background:#4a4a4a;"></div>
<div style="position:absolute;left:963px;top:789px;width:15px;height:15px;border:2px solid #777;border-radius:2.5px;"></div>
<div style="position:absolute;left:1024px;top:788.81px;font-size:14.4px;line-height:14.4px;height:18.7px;color:#222222;font-weight:400;white-space:nowrap;">новая</div>
<div style="position:absolute;left:1113px;top:788.98px;font-size:14.2px;line-height:14.2px;height:18.5px;color:#222222;font-weight:400;white-space:nowrap;width:84px;overflow:hidden;">Общее пересечение</div>
<div style="position:absolute;left:1213px;top:788.98px;font-size:14.2px;line-height:14.2px;height:18.5px;color:#222222;font-weight:400;white-space:nowrap;width:96px;overflow:hidden;">Обнаружено пересечение</div>
<div style="position:absolute;left:1443.5px;top:788.98px;font-size:14.2px;line-height:14.2px;height:18.5px;color:#222222;font-weight:400;white-space:nowrap;width:182.5px;overflow:hidden;">Базовая стена:ADSK_Внутренняя</div>
<div style="position:absolute;left:1643.7px;top:789.74px;font-size:13.3px;line-height:13.3px;height:17.3px;color:#222222;font-weight:400;white-space:nowrap;">ОБ-0017</div>
<div style="position:absolute;left:943px;top:803px;width:838px;height:6px;background:#6b6b6b;"></div>
<div style="position:absolute;left:943px;top:803px;width:181px;height:6px;background:#3a93b0;"></div>
<div style="position:absolute;left:1833px;top:0px;width:3px;height:809px;background:#000000;"></div>
</body></html>
